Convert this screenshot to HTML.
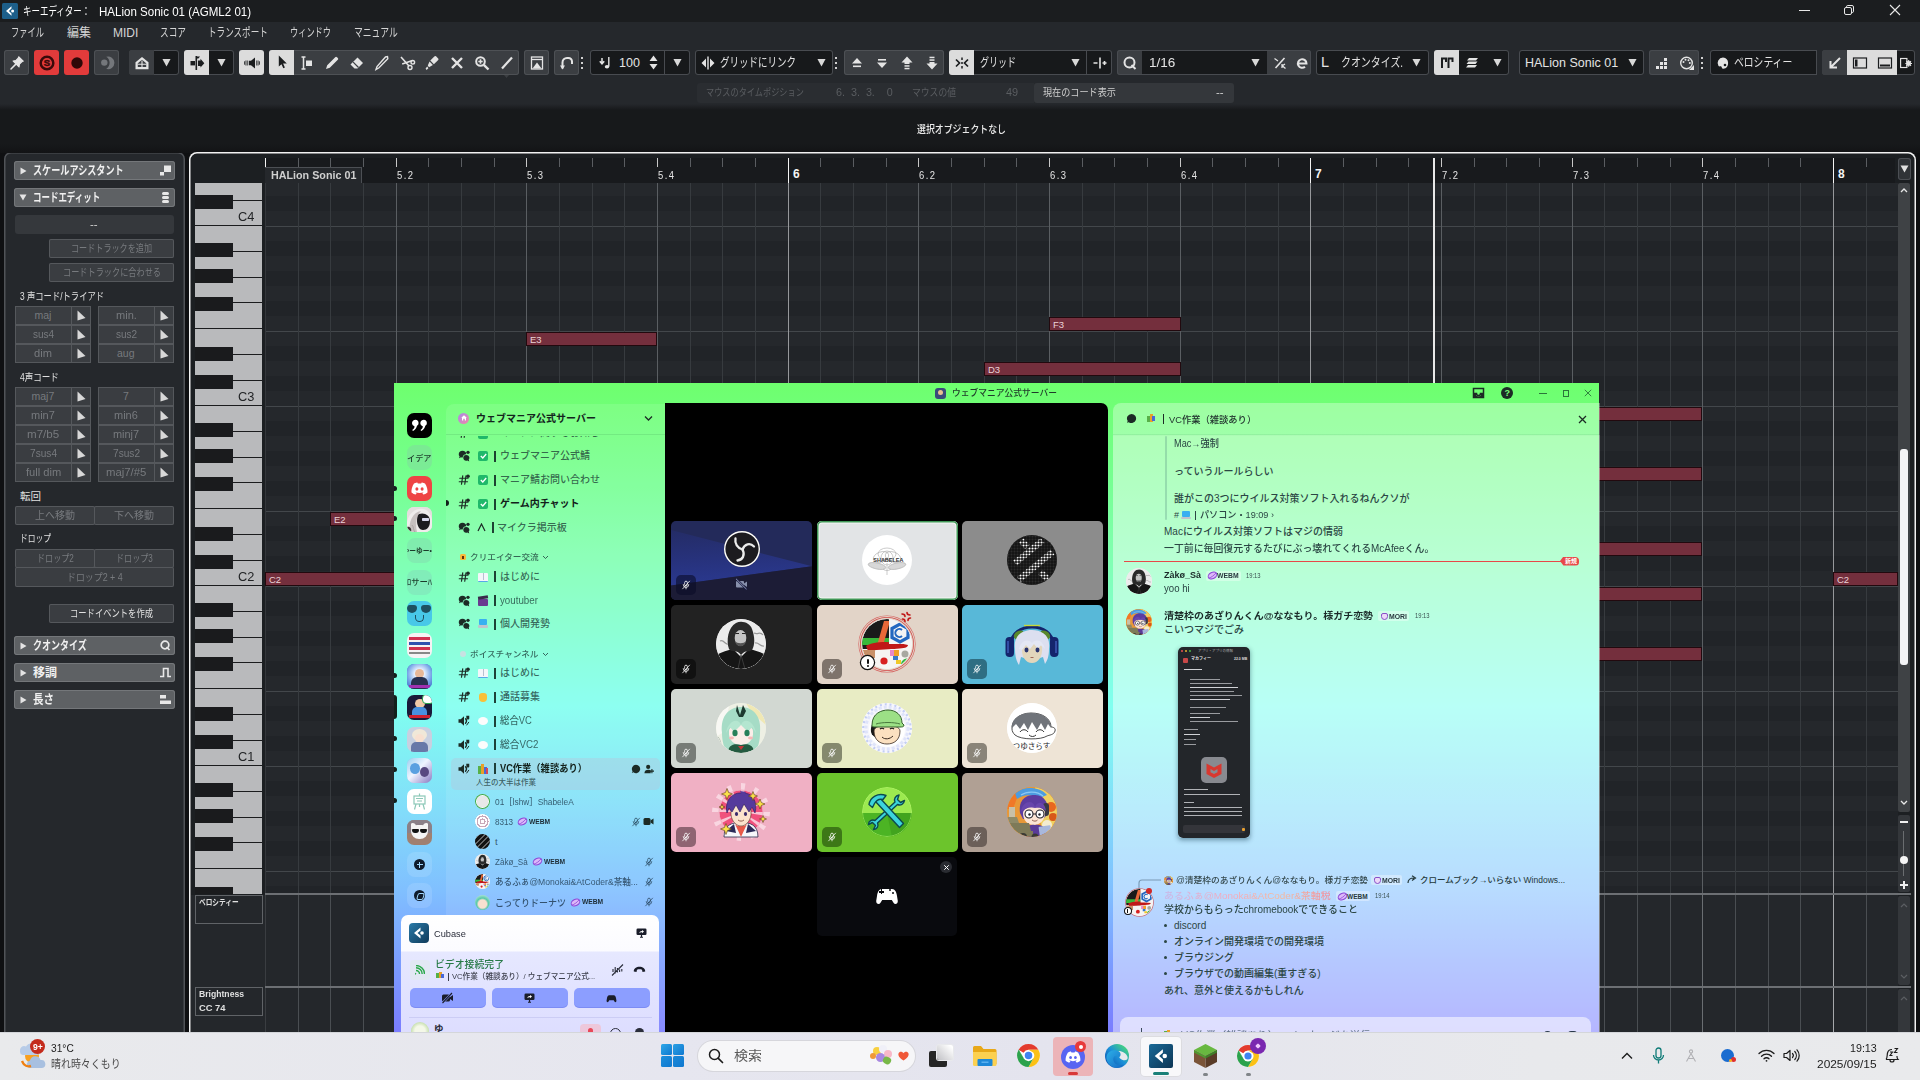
<!DOCTYPE html>
<html lang="ja"><head><meta charset="utf-8"><title>Key Editor</title><style>
html,body{margin:0;padding:0;background:#0f1012;}
body{width:1920px;height:1080px;overflow:hidden;position:relative;font-family:"Liberation Sans","Noto Sans CJK JP",sans-serif;}
#root{position:absolute;left:0;top:0;width:1920px;height:1080px;overflow:hidden;}
#root div,.a,svg.a{position:absolute;}
.t{position:absolute;white-space:nowrap;display:block;}
</style></head><body><div id="root">
<div style="left:0px;top:153px;width:1920px;height:880px;background:#0f1012;"></div>
<div style="left:4px;top:152px;width:181px;height:890px;background:#25282c;border-radius:7px;box-shadow:inset 0 0 0 1.5px #505357;"></div>
<div style="left:14px;top:161px;width:161px;height:19px;background:#5e6164;border-radius:3px;box-shadow:inset 0 0 0 1px #74777a;"></div><svg class="a" style="left:20px;top:167px" width="7" height="8" viewBox="0 0 7 8"><path d="M0.5 0.5 V7.5 L6.5 4Z" fill="#e4e4e4"/></svg><span class="t" id="t25" style="left:33px;top:162.8px;font-size:12px;line-height:17px;color:#f0f0f0;font-weight:700;transform:scaleX(0.7583);transform-origin:left center;">スケールアシスタント</span><svg class="a" style="left:159px;top:164px" width="13" height="13" viewBox="0 0 13 13"><rect x="5" y="1.5" width="7" height="6.5" fill="#e8e8e8"/><rect x="1" y="8" width="4" height="3.5" fill="#e8e8e8"/></svg>
<div style="left:14px;top:188px;width:161px;height:19px;background:#5e6164;border-radius:3px;box-shadow:inset 0 0 0 1px #74777a;"></div><svg class="a" style="left:19px;top:194px" width="8" height="7" viewBox="0 0 8 7"><path d="M0.5 0.5 H7.5 L4 6.5Z" fill="#e4e4e4"/></svg><span class="t" id="t26" style="left:33px;top:189.8px;font-size:12px;line-height:17px;color:#f0f0f0;font-weight:700;transform:scaleX(0.7053);transform-origin:left center;">コードエディット</span><svg class="a" style="left:159px;top:191px" width="13" height="13" viewBox="0 0 13 13"><rect x="3" y="1" width="7" height="3" rx="1.5" fill="#e8e8e8"/><rect x="3" y="5" width="7" height="3" rx="1.5" fill="#e8e8e8"/><rect x="3" y="9" width="7" height="3" rx="1.5" fill="#e8e8e8"/></svg>
<div style="left:15px;top:215px;width:159px;height:19px;background:#35383c;border-radius:3px;"></div>
<span class="t" id="t27" style="left:90px;top:217.5px;font-size:10px;line-height:14px;color:#d0d0d0;transform:scaleX(1.1429);transform-origin:left center;">--</span>
<div style="left:49px;top:239px;width:125px;height:19px;background:#3a3d41;box-shadow:inset 0 0 0 1px #55585c;border-radius:2px;"></div><span class="t" id="t28" style="left:71.0px;top:241px;font-size:10.5px;line-height:15px;color:#777a7e;transform:scaleX(0.7714);transform-origin:left center;">コードトラックを追加</span>
<div style="left:49px;top:263px;width:125px;height:19px;background:#3a3d41;box-shadow:inset 0 0 0 1px #55585c;border-radius:2px;"></div><span class="t" id="t29" style="left:62.5px;top:265px;font-size:10.5px;line-height:15px;color:#777a7e;transform:scaleX(0.7778);transform-origin:left center;">コードトラックに合わせる</span>
<span class="t" id="t30" style="left:20px;top:288.5px;font-size:10.5px;line-height:15px;color:#e0e0e0;transform:scaleX(0.7925);transform-origin:left center;">3 声コード/トライアド</span>
<div style="left:15px;top:306px;width:76px;height:19px;background:#3a3d41;box-shadow:inset 0 0 0 1px #55585c;"></div><div style="left:71px;top:306px;width:1px;height:19px;background:#55585c;"></div><span class="t" id="t31" style="left:34.5px;top:308px;font-size:10.5px;line-height:15px;color:#777a7e;transform:scaleX(1.0000);transform-origin:left center;">maj</span><svg class="a" style="left:77px;top:310px" width="9" height="11" viewBox="0 0 9 11"><path d="M0.5 0.5 V10.5 L8.5 8 Z" fill="#d8d8d8"/></svg>
<div style="left:98px;top:306px;width:76px;height:19px;background:#3a3d41;box-shadow:inset 0 0 0 1px #55585c;"></div><div style="left:154px;top:306px;width:1px;height:19px;background:#55585c;"></div><span class="t" id="t32" style="left:115.5px;top:308px;font-size:10.5px;line-height:15px;color:#777a7e;transform:scaleX(1.0500);transform-origin:left center;">min.</span><svg class="a" style="left:160px;top:310px" width="9" height="11" viewBox="0 0 9 11"><path d="M0.5 0.5 V10.5 L8.5 8 Z" fill="#d8d8d8"/></svg>
<div style="left:15px;top:325px;width:76px;height:19px;background:#3a3d41;box-shadow:inset 0 0 0 1px #55585c;"></div><div style="left:71px;top:325px;width:1px;height:19px;background:#55585c;"></div><span class="t" id="t33" style="left:32.5px;top:327px;font-size:10.5px;line-height:15px;color:#777a7e;transform:scaleX(0.9545);transform-origin:left center;">sus4</span><svg class="a" style="left:77px;top:329px" width="9" height="11" viewBox="0 0 9 11"><path d="M0.5 0.5 V10.5 L8.5 8 Z" fill="#d8d8d8"/></svg>
<div style="left:98px;top:325px;width:76px;height:19px;background:#3a3d41;box-shadow:inset 0 0 0 1px #55585c;"></div><div style="left:154px;top:325px;width:1px;height:19px;background:#55585c;"></div><span class="t" id="t34" style="left:115.5px;top:327px;font-size:10.5px;line-height:15px;color:#777a7e;transform:scaleX(0.9545);transform-origin:left center;">sus2</span><svg class="a" style="left:160px;top:329px" width="9" height="11" viewBox="0 0 9 11"><path d="M0.5 0.5 V10.5 L8.5 8 Z" fill="#d8d8d8"/></svg>
<div style="left:15px;top:344px;width:76px;height:19px;background:#3a3d41;box-shadow:inset 0 0 0 1px #55585c;"></div><div style="left:71px;top:344px;width:1px;height:19px;background:#55585c;"></div><span class="t" id="t35" style="left:34.0px;top:346px;font-size:10.5px;line-height:15px;color:#777a7e;transform:scaleX(1.0588);transform-origin:left center;">dim</span><svg class="a" style="left:77px;top:348px" width="9" height="11" viewBox="0 0 9 11"><path d="M0.5 0.5 V10.5 L8.5 8 Z" fill="#d8d8d8"/></svg>
<div style="left:98px;top:344px;width:76px;height:19px;background:#3a3d41;box-shadow:inset 0 0 0 1px #55585c;"></div><div style="left:154px;top:344px;width:1px;height:19px;background:#55585c;"></div><span class="t" id="t36" style="left:117.0px;top:346px;font-size:10.5px;line-height:15px;color:#777a7e;transform:scaleX(1.0000);transform-origin:left center;">aug</span><svg class="a" style="left:160px;top:348px" width="9" height="11" viewBox="0 0 9 11"><path d="M0.5 0.5 V10.5 L8.5 8 Z" fill="#d8d8d8"/></svg>
<span class="t" id="t37" style="left:20px;top:369.5px;font-size:10.5px;line-height:15px;color:#e0e0e0;transform:scaleX(0.8125);transform-origin:left center;">4声コード</span>
<div style="left:15px;top:387px;width:76px;height:19px;background:#3a3d41;box-shadow:inset 0 0 0 1px #55585c;"></div><div style="left:71px;top:387px;width:1px;height:19px;background:#55585c;"></div><span class="t" id="t38" style="left:31.5px;top:389px;font-size:10.5px;line-height:15px;color:#777a7e;transform:scaleX(1.0000);transform-origin:left center;">maj7</span><svg class="a" style="left:77px;top:391px" width="9" height="11" viewBox="0 0 9 11"><path d="M0.5 0.5 V10.5 L8.5 8 Z" fill="#d8d8d8"/></svg>
<div style="left:98px;top:387px;width:76px;height:19px;background:#3a3d41;box-shadow:inset 0 0 0 1px #55585c;"></div><div style="left:154px;top:387px;width:1px;height:19px;background:#55585c;"></div><span class="t" id="t39" style="left:123.0px;top:389px;font-size:10.5px;line-height:15px;color:#777a7e;transform:scaleX(1.0000);transform-origin:left center;">7</span><svg class="a" style="left:160px;top:391px" width="9" height="11" viewBox="0 0 9 11"><path d="M0.5 0.5 V10.5 L8.5 8 Z" fill="#d8d8d8"/></svg>
<div style="left:15px;top:406px;width:76px;height:19px;background:#3a3d41;box-shadow:inset 0 0 0 1px #55585c;"></div><div style="left:71px;top:406px;width:1px;height:19px;background:#55585c;"></div><span class="t" id="t40" style="left:31.0px;top:408px;font-size:10.5px;line-height:15px;color:#777a7e;transform:scaleX(1.0435);transform-origin:left center;">min7</span><svg class="a" style="left:77px;top:410px" width="9" height="11" viewBox="0 0 9 11"><path d="M0.5 0.5 V10.5 L8.5 8 Z" fill="#d8d8d8"/></svg>
<div style="left:98px;top:406px;width:76px;height:19px;background:#3a3d41;box-shadow:inset 0 0 0 1px #55585c;"></div><div style="left:154px;top:406px;width:1px;height:19px;background:#55585c;"></div><span class="t" id="t41" style="left:114.0px;top:408px;font-size:10.5px;line-height:15px;color:#777a7e;transform:scaleX(1.0435);transform-origin:left center;">min6</span><svg class="a" style="left:160px;top:410px" width="9" height="11" viewBox="0 0 9 11"><path d="M0.5 0.5 V10.5 L8.5 8 Z" fill="#d8d8d8"/></svg>
<div style="left:15px;top:425px;width:76px;height:19px;background:#3a3d41;box-shadow:inset 0 0 0 1px #55585c;"></div><div style="left:71px;top:425px;width:1px;height:19px;background:#55585c;"></div><span class="t" id="t42" style="left:27.0px;top:427px;font-size:10.5px;line-height:15px;color:#777a7e;transform:scaleX(1.1034);transform-origin:left center;">m7/b5</span><svg class="a" style="left:77px;top:429px" width="9" height="11" viewBox="0 0 9 11"><path d="M0.5 0.5 V10.5 L8.5 8 Z" fill="#d8d8d8"/></svg>
<div style="left:98px;top:425px;width:76px;height:19px;background:#3a3d41;box-shadow:inset 0 0 0 1px #55585c;"></div><div style="left:154px;top:425px;width:1px;height:19px;background:#55585c;"></div><span class="t" id="t43" style="left:113.0px;top:427px;font-size:10.5px;line-height:15px;color:#777a7e;transform:scaleX(1.0400);transform-origin:left center;">minj7</span><svg class="a" style="left:160px;top:429px" width="9" height="11" viewBox="0 0 9 11"><path d="M0.5 0.5 V10.5 L8.5 8 Z" fill="#d8d8d8"/></svg>
<div style="left:15px;top:444px;width:76px;height:19px;background:#3a3d41;box-shadow:inset 0 0 0 1px #55585c;"></div><div style="left:71px;top:444px;width:1px;height:19px;background:#55585c;"></div><span class="t" id="t44" style="left:29.5px;top:446px;font-size:10.5px;line-height:15px;color:#777a7e;transform:scaleX(0.9643);transform-origin:left center;">7sus4</span><svg class="a" style="left:77px;top:448px" width="9" height="11" viewBox="0 0 9 11"><path d="M0.5 0.5 V10.5 L8.5 8 Z" fill="#d8d8d8"/></svg>
<div style="left:98px;top:444px;width:76px;height:19px;background:#3a3d41;box-shadow:inset 0 0 0 1px #55585c;"></div><div style="left:154px;top:444px;width:1px;height:19px;background:#55585c;"></div><span class="t" id="t45" style="left:112.5px;top:446px;font-size:10.5px;line-height:15px;color:#777a7e;transform:scaleX(0.9643);transform-origin:left center;">7sus2</span><svg class="a" style="left:160px;top:448px" width="9" height="11" viewBox="0 0 9 11"><path d="M0.5 0.5 V10.5 L8.5 8 Z" fill="#d8d8d8"/></svg>
<div style="left:15px;top:463px;width:76px;height:19px;background:#3a3d41;box-shadow:inset 0 0 0 1px #55585c;"></div><div style="left:71px;top:463px;width:1px;height:19px;background:#55585c;"></div><span class="t" id="t46" style="left:25.5px;top:465px;font-size:10.5px;line-height:15px;color:#777a7e;transform:scaleX(1.0606);transform-origin:left center;">full dim</span><svg class="a" style="left:77px;top:467px" width="9" height="11" viewBox="0 0 9 11"><path d="M0.5 0.5 V10.5 L8.5 8 Z" fill="#d8d8d8"/></svg>
<div style="left:98px;top:463px;width:76px;height:19px;background:#3a3d41;box-shadow:inset 0 0 0 1px #55585c;"></div><div style="left:154px;top:463px;width:1px;height:19px;background:#55585c;"></div><span class="t" id="t47" style="left:106.0px;top:465px;font-size:10.5px;line-height:15px;color:#777a7e;transform:scaleX(1.0811);transform-origin:left center;">maj7/#5</span><svg class="a" style="left:160px;top:467px" width="9" height="11" viewBox="0 0 9 11"><path d="M0.5 0.5 V10.5 L8.5 8 Z" fill="#d8d8d8"/></svg>
<span class="t" id="t48" style="left:20px;top:488.5px;font-size:10.5px;line-height:15px;color:#e0e0e0;transform:scaleX(1.0000);transform-origin:left center;">転回</span>
<div style="left:15px;top:506px;width:80px;height:19px;background:#3a3d41;box-shadow:inset 0 0 0 1px #55585c;border-radius:2px;"></div><span class="t" id="t49" style="left:35.0px;top:508px;font-size:10.5px;line-height:15px;color:#777a7e;transform:scaleX(0.9524);transform-origin:left center;">上へ移動</span>
<div style="left:94px;top:506px;width:80px;height:19px;background:#3a3d41;box-shadow:inset 0 0 0 1px #55585c;border-radius:2px;"></div><span class="t" id="t50" style="left:114.0px;top:508px;font-size:10.5px;line-height:15px;color:#777a7e;transform:scaleX(0.9524);transform-origin:left center;">下へ移動</span>
<span class="t" id="t51" style="left:20px;top:531px;font-size:10.5px;line-height:15px;color:#e0e0e0;transform:scaleX(0.7381);transform-origin:left center;">ドロップ</span>
<div style="left:15px;top:549px;width:80px;height:19px;background:#3a3d41;box-shadow:inset 0 0 0 1px #55585c;border-radius:2px;"></div><span class="t" id="t52" style="left:36.5px;top:551px;font-size:10.5px;line-height:15px;color:#777a7e;transform:scaleX(0.7708);transform-origin:left center;">ドロップ2</span>
<div style="left:94px;top:549px;width:80px;height:19px;background:#3a3d41;box-shadow:inset 0 0 0 1px #55585c;border-radius:2px;"></div><span class="t" id="t53" style="left:115.5px;top:551px;font-size:10.5px;line-height:15px;color:#777a7e;transform:scaleX(0.7708);transform-origin:left center;">ドロップ3</span>
<div style="left:15px;top:567px;width:159px;height:20px;background:#3a3d41;box-shadow:inset 0 0 0 1px #55585c;border-radius:2px;"></div><span class="t" id="t54" style="left:66.5px;top:569.5px;font-size:10.5px;line-height:15px;color:#777a7e;transform:scaleX(0.8485);transform-origin:left center;">ドロップ2 + 4</span>
<div style="left:49px;top:604px;width:125px;height:19px;background:#3a3d41;box-shadow:inset 0 0 0 1px #55585c;border-radius:2px;"></div><span class="t" id="t55" style="left:70.0px;top:606px;font-size:10.5px;line-height:15px;color:#e0e0e0;transform:scaleX(0.7905);transform-origin:left center;">コードイベントを作成</span>
<div style="left:14px;top:636px;width:161px;height:19px;background:#5e6164;border-radius:3px;box-shadow:inset 0 0 0 1px #74777a;"></div><svg class="a" style="left:20px;top:642px" width="7" height="8" viewBox="0 0 7 8"><path d="M0.5 0.5 V7.5 L6.5 4Z" fill="#e4e4e4"/></svg><span class="t" id="t56" style="left:33px;top:637.8px;font-size:12px;line-height:17px;color:#f0f0f0;font-weight:700;transform:scaleX(0.7500);transform-origin:left center;">クオンタイズ</span><svg class="a" style="left:159px;top:639px" width="13" height="13" viewBox="0 0 13 13"><circle cx="6" cy="6" r="3.8" fill="none" stroke="#e8e8e8" stroke-width="1.7"/><path d="M7.5 8 L10.5 11" stroke="#e8e8e8" stroke-width="1.7"/></svg>
<div style="left:14px;top:663px;width:161px;height:19px;background:#5e6164;border-radius:3px;box-shadow:inset 0 0 0 1px #74777a;"></div><svg class="a" style="left:20px;top:669px" width="7" height="8" viewBox="0 0 7 8"><path d="M0.5 0.5 V7.5 L6.5 4Z" fill="#e4e4e4"/></svg><span class="t" id="t57" style="left:33px;top:664.8px;font-size:12px;line-height:17px;color:#f0f0f0;font-weight:700;transform:scaleX(1.0000);transform-origin:left center;">移調</span><svg class="a" style="left:159px;top:666px" width="13" height="13" viewBox="0 0 13 13"><path d="M1 10.5 H4.5 V2.5 H9 V10.5 H12" fill="none" stroke="#e8e8e8" stroke-width="1.6"/></svg>
<div style="left:14px;top:690px;width:161px;height:19px;background:#5e6164;border-radius:3px;box-shadow:inset 0 0 0 1px #74777a;"></div><svg class="a" style="left:20px;top:696px" width="7" height="8" viewBox="0 0 7 8"><path d="M0.5 0.5 V7.5 L6.5 4Z" fill="#e4e4e4"/></svg><span class="t" id="t58" style="left:33px;top:691.8px;font-size:12px;line-height:17px;color:#f0f0f0;font-weight:700;transform:scaleX(0.8750);transform-origin:left center;">長さ</span><svg class="a" style="left:159px;top:693px" width="13" height="13" viewBox="0 0 13 13"><rect x="1" y="2" width="6" height="3.5" fill="#e8e8e8"/><rect x="1" y="7.5" width="11" height="3.5" fill="#e8e8e8"/></svg>
<div style="left:0px;top:0px;width:1920px;height:22px;background:#1b1d1f;"></div>
<div style="left:0px;top:22px;width:1920px;height:85px;background:#25282c;"></div>
<div style="left:0px;top:104px;width:1920px;height:49px;background:linear-gradient(180deg,#25282c 0,#17191b 6px,#17191b 40px,#121315 49px);"></div>
<svg class="a" style="left:2px;top:3px" width="16" height="16" viewBox="0 0 16 16"><rect width="16" height="16" rx="1.5" fill="#1d5f8a"/><path d="M9.5 3.2 L4 8 L9.5 12.8 L9.5 10.4 L6.9 8 L9.5 5.6 Z" fill="#fff"/><circle cx="10.6" cy="8" r="1.5" fill="#fff"/></svg>
<span class="t" id="t1" style="left:23px;top:4px;font-size:12px;line-height:17px;color:#ffffff;transform:scaleX(0.7053);transform-origin:left center;">キーエディター：</span>
<span class="t" id="t2" style="left:98.5px;top:4px;font-size:12px;line-height:17px;color:#ffffff;transform:scaleX(0.9620);transform-origin:left center;">HALion Sonic 01 (AGML2 01)</span>
<div style="left:1799px;top:10px;width:11px;height:1px;background:#e8e8e8;"></div>
<svg class="a" style="left:1843px;top:4px" width="12" height="12" viewBox="0 0 12 12" fill="none" stroke="#e8e8e8" stroke-width="1"><rect x="1.5" y="3.5" width="7" height="7" rx="1.5"/><path d="M3.5 3.5 V2.8 A1.3 1.3 0 0 1 4.8 1.5 H9 A1.5 1.5 0 0 1 10.5 3 V7.2 A1.3 1.3 0 0 1 9.2 8.5 H8.5"/></svg>
<svg class="a" style="left:1889px;top:4px" width="12" height="12" viewBox="0 0 12 12" stroke="#e8e8e8" stroke-width="1.1"><path d="M1 1 L11 11 M11 1 L1 11"/></svg>
<span class="t" id="t3" style="left:11px;top:24.5px;font-size:12px;line-height:17px;color:#d4d4d4;transform:scaleX(0.6875);transform-origin:left center;">ファイル</span>
<span class="t" id="t4" style="left:67px;top:24.5px;font-size:12px;line-height:17px;color:#d4d4d4;transform:scaleX(1.0000);transform-origin:left center;">編集</span>
<span class="t" id="t5" style="left:113px;top:24.5px;font-size:12px;line-height:17px;color:#d4d4d4;transform:scaleX(1.0000);transform-origin:left center;">MIDI</span>
<span class="t" id="t6" style="left:160px;top:24.5px;font-size:12px;line-height:17px;color:#d4d4d4;transform:scaleX(0.7222);transform-origin:left center;">スコア</span>
<span class="t" id="t7" style="left:208px;top:24.5px;font-size:12px;line-height:17px;color:#d4d4d4;transform:scaleX(0.7143);transform-origin:left center;">トランスポート</span>
<span class="t" id="t8" style="left:290px;top:24.5px;font-size:12px;line-height:17px;color:#d4d4d4;transform:scaleX(0.6833);transform-origin:left center;">ウィンドウ</span>
<span class="t" id="t9" style="left:354px;top:24.5px;font-size:12px;line-height:17px;color:#d4d4d4;transform:scaleX(0.7333);transform-origin:left center;">マニュアル</span>
<div style="left:4px;top:50px;width:25px;height:25px;background:#3b3e42;border-radius:3px;box-shadow:inset 0 0 0 1px #4e5155;"></div>
<svg class="a" style="left:6.5px;top:52.5px" width="20" height="20" viewBox="0 0 20 20"><path d="M11.8 3.8 L16.2 8.2 L14.8 8.8 L12.4 11.2 L12 13.8 L6.2 8 L8.8 7.6 L11.2 5.2 Z" fill="#e4e4e4" stroke="#e4e4e4" stroke-width="1.2" stroke-linejoin="round"/><path d="M8.6 11.4 L4 16" stroke="#e4e4e4" stroke-width="1.5" stroke-linecap="round"/></svg>
<div style="left:34px;top:50px;width:25px;height:25px;background:#e23b3b;border-radius:3px;"></div>
<svg class="a" style="left:36.5px;top:52.5px" width="20" height="20" viewBox="0 0 20 20"><circle cx="10" cy="10" r="6.3" fill="none" stroke="#3a0a0a" stroke-width="2.5"/><text x="10" y="13.3" font-size="9.5" font-weight="700" text-anchor="middle" fill="#3a0a0a" stroke="#3a0a0a" stroke-width="0.5" font-family="Liberation Sans,sans-serif">S</text></svg>
<div style="left:64px;top:50px;width:25px;height:25px;background:#e23b3b;border-radius:3px;"></div>
<svg class="a" style="left:66.5px;top:52.5px" width="20" height="20" viewBox="0 0 20 20"><circle cx="10" cy="10" r="5.7" fill="#2e0808"/></svg>
<div style="left:94px;top:50px;width:25px;height:25px;background:#3b3e42;border-radius:3px;box-shadow:inset 0 0 0 1px #4e5155;"></div>
<svg class="a" style="left:96.5px;top:52.5px" width="20" height="20" viewBox="0 0 20 20"><circle cx="7.3" cy="9.6" r="3.2" fill="#74777b"/><path d="M9.2 3.8 A6.3 6.3 0 1 1 9.2 15.8 A7 7 0 0 0 9.2 3.8Z" fill="#74777b"/></svg>
<div style="left:129px;top:50px;width:50px;height:25px;background:#17191b;border-radius:3px;box-shadow:inset 0 0 0 1px #484b50;"></div>
<div style="left:129px;top:50px;width:25px;height:25px;background:#3b3e42;border-radius:3px 0 0 3px;"></div>
<svg class="a" style="left:131.5px;top:52.5px" width="20" height="20" viewBox="0 0 20 20"><path d="M3.5 9.2 L10 4 L16.5 9.2 V16.2 H3.5Z" fill="#e4e4e4"/><path d="M5.8 10.2 L10 6.8 L14.2 10.2 V14 H5.8Z" fill="#3b3e42"/><path d="M10 7.5 V14 M5.8 11.2 H14.2" stroke="#e4e4e4" stroke-width="1.1"/></svg>
<svg class="a" style="left:162.0px;top:58.45px" width="9.0" height="9.0" viewBox="0 0 10 10"><path d="M0.5 1 H9.5 L5 9.5 Z" fill="#d8d8d8"/></svg>
<div style="left:184px;top:50px;width:50px;height:25px;background:#17191b;border-radius:3px;box-shadow:inset 0 0 0 1px #484b50;"></div>
<div style="left:184px;top:50px;width:25px;height:25px;background:#dcdcdc;border-radius:3px 0 0 3px;"></div>
<svg class="a" style="left:186.5px;top:52.5px" width="20" height="20" viewBox="0 0 20 20"><path d="M9.3 3 V17" stroke="#1b1d1f" stroke-width="1.6"/><path d="M9.3 3.5 H13 L11.4 5.5 H9.3Z" fill="#1b1d1f"/><rect x="3.5" y="8" width="4.5" height="4.4" fill="#1b1d1f"/><path d="M11 7.5 H13.5 V5.8 L17.3 10.2 L13.5 14.6 V12.9 H11Z" fill="#1b1d1f"/></svg>
<svg class="a" style="left:217.0px;top:58.45px" width="9.0" height="9.0" viewBox="0 0 10 10"><path d="M0.5 1 H9.5 L5 9.5 Z" fill="#d8d8d8"/></svg>
<div style="left:239px;top:50px;width:25px;height:25px;background:#dcdcdc;border-radius:3px;"></div>
<svg class="a" style="left:241.5px;top:52.5px" width="20" height="20" viewBox="0 0 20 20"><path d="M6.8 7.8 H9 L13 4.5 V15.5 L9 12.2 H6.8Z" fill="#1b1d1f"/><path d="M5.3 7.5 V12.5 M3.9 7.5 V12.5 M2.5 8.3 V11.7 M14.7 7.5 V12.5 M16.1 7.5 V12.5 M17.5 8.3 V11.7" stroke="#1b1d1f" stroke-width="0.8"/></svg>
<div style="left:269px;top:50px;width:250px;height:25px;background:#3b3e42;border-radius:3px;box-shadow:inset 0 0 0 1px #4e5155;"></div>
<div style="left:269px;top:50px;width:25px;height:25px;background:#dcdcdc;border-radius:3px 0 0 3px;"></div>
<svg class="a" style="left:271.5px;top:52.5px" width="20" height="20" viewBox="0 0 20 20"><path d="M6.8 2.5 V13.6 L9.5 11.2 L11.3 15.3 L12.9 14.6 L11.1 10.6 H14.8 Z" fill="#1b1d1f"/></svg>
<svg class="a" style="left:296.5px;top:52.5px" width="20" height="20" viewBox="0 0 20 20"><path d="M6.5 4 V16 M4.5 4 H8.5 M4.5 16 H8.5" stroke="#e4e4e4" stroke-width="1.5" fill="none"/><rect x="9" y="7.5" width="6" height="5.5" fill="#e4e4e4"/></svg>
<svg class="a" style="left:321.5px;top:52.5px" width="20" height="20" viewBox="0 0 20 20"><path d="M4 16 L5.2 12.2 L13.2 4.2 A1.2 1.2 0 0 1 15 4.2 L15.8 5 A1.2 1.2 0 0 1 15.8 6.8 L7.8 14.8 Z" fill="#e4e4e4"/></svg>
<svg class="a" style="left:346.5px;top:52.5px" width="20" height="20" viewBox="0 0 20 20"><path d="M3.5 11.5 L10.5 4.5 L16 10 L10.5 15.5 H7.5 Z" fill="#e4e4e4"/><path d="M6.2 9.2 L11.5 14.5" stroke="#3b3e42" stroke-width="1.2"/></svg>
<svg class="a" style="left:371.5px;top:52.5px" width="20" height="20" viewBox="0 0 20 20"><path d="M4 16.5 L5 13.5 L13.5 4 L15.5 3.5 L15.8 5.8 L7 14.8 Z" fill="none" stroke="#e4e4e4" stroke-width="1.4"/></svg>
<svg class="a" style="left:396.5px;top:52.5px" width="20" height="20" viewBox="0 0 20 20"><path d="M4 4 L12 13 M5.2 11 L15.5 7.5" stroke="#e4e4e4" stroke-width="1.6" fill="none"/><circle cx="13" cy="14.5" r="2" fill="none" stroke="#e4e4e4" stroke-width="1.4"/><circle cx="15.8" cy="9.3" r="1.8" fill="none" stroke="#e4e4e4" stroke-width="1.4"/></svg>
<svg class="a" style="left:421.5px;top:52.5px" width="20" height="20" viewBox="0 0 20 20"><path d="M8.3 7.6 L12.6 3.3 A1 1 0 0 1 14 3.3 L16.2 5.5 A1 1 0 0 1 16.2 6.9 L11.9 11.2Z" fill="#e4e4e4"/><path d="M7.5 8.6 L10.9 12 L7 14.2 L5.8 12.4Z" fill="#e4e4e4"/><path d="M5.2 13.6 L6.4 15.2 L4.6 17 L3.6 15.6Z" fill="#e4e4e4"/></svg>
<svg class="a" style="left:446.5px;top:52.5px" width="20" height="20" viewBox="0 0 20 20"><path d="M5 5 L15 15 M15 5 L5 15" stroke="#e4e4e4" stroke-width="2.4"/></svg>
<svg class="a" style="left:471.5px;top:52.5px" width="20" height="20" viewBox="0 0 20 20"><circle cx="8.5" cy="8.5" r="4.3" fill="none" stroke="#e4e4e4" stroke-width="2"/><path d="M11.8 11.8 L16.5 16.5" stroke="#e4e4e4" stroke-width="2.4"/><path d="M6.3 8.5 H10.7 M8.5 6.3 V10.7" stroke="#e4e4e4" stroke-width="1.6"/></svg>
<svg class="a" style="left:496.5px;top:52.5px" width="20" height="20" viewBox="0 0 20 20"><path d="M5 15.5 L15 4.5" stroke="#e4e4e4" stroke-width="2.2"/></svg>
<svg class="a" style="left:504px;top:74.5px" width="5" height="3" viewBox="0 0 5 3"><path d="M0 0 H5 L2.5 3Z" fill="#3b3e42"/></svg>
<div style="left:524px;top:50px;width:25px;height:25px;background:#3b3e42;border-radius:3px;box-shadow:inset 0 0 0 1px #4e5155;"></div>
<svg class="a" style="left:526.5px;top:52.5px" width="20" height="20" viewBox="0 0 20 20"><rect x="4.5" y="4" width="11" height="12" fill="none" stroke="#e4e4e4" stroke-width="1.3"/><path d="M4.5 6.5 H15.5" stroke="#e4e4e4" stroke-width="1.3"/><path d="M5.5 15.5 L10 9.5 L14.5 15.5Z" fill="#e4e4e4"/></svg>
<div style="left:554px;top:50px;width:25px;height:25px;background:#3b3e42;border-radius:3px;box-shadow:inset 0 0 0 1px #4e5155;"></div>
<svg class="a" style="left:556.5px;top:52.5px" width="20" height="20" viewBox="0 0 20 20"><path d="M5.5 15.5 V9.5 A4.5 4.5 0 0 1 10 5 H11.5 A3.5 3.5 0 0 1 15 8.5 V11" fill="none" stroke="#e4e4e4" stroke-width="2"/><path d="M3 12.5 L5.5 16.5 L8 12.5Z" fill="#e4e4e4"/></svg>
<div style="left:581px;top:57px;width:2px;height:2px;background:#d0d0d0;"></div><div style="left:581px;top:62px;width:2px;height:2px;background:#d0d0d0;"></div><div style="left:581px;top:67px;width:2px;height:2px;background:#d0d0d0;"></div>
<div style="left:590px;top:50px;width:100px;height:25px;background:#17191b;border-radius:3px;box-shadow:inset 0 0 0 1px #484b50;"></div>
<div style="left:664px;top:50px;width:1px;height:25px;background:#484b50;"></div>
<svg class="a" style="left:595.5px;top:52.5px" width="20" height="20" viewBox="0 0 20 20"><path d="M6 5 V10 M3.8 8.2 L6 10.8 L8.2 8.2" stroke="#e4e4e4" stroke-width="1.5" fill="none"/><path d="M12.8 4 V13.5" stroke="#e4e4e4" stroke-width="1.4"/><ellipse cx="11" cy="13.8" rx="2.2" ry="1.7" fill="#e4e4e4"/></svg>
<span class="t" id="t10" style="left:619px;top:53.5px;font-size:12.5px;line-height:18px;color:#e4e4e4;transform:scaleX(1.0000);transform-origin:left center;">100</span>
<svg class="a" style="left:649px;top:55px" width="9" height="15" viewBox="0 0 9 15"><path d="M0.5 6 L4.5 0.5 L8.5 6Z M0.5 9 L4.5 14.5 L8.5 9Z" fill="#e4e4e4"/></svg>
<svg class="a" style="left:673.0px;top:58.45px" width="9.0" height="9.0" viewBox="0 0 10 10"><path d="M0.5 1 H9.5 L5 9.5 Z" fill="#d8d8d8"/></svg>
<div style="left:695px;top:50px;width:138px;height:25px;background:#17191b;border-radius:3px;box-shadow:inset 0 0 0 1px #484b50;"></div>
<svg class="a" style="left:697.5px;top:52.5px" width="20" height="20" viewBox="0 0 20 20"><path d="M10 3.5 V16.5" stroke="#e4e4e4" stroke-width="1.4"/><path d="M8 5.5 V14.5 L3.5 10Z M12 5.5 V14.5 L16.5 10Z" fill="#e4e4e4"/></svg>
<span class="t" id="t11" style="left:720px;top:53.5px;font-size:12.5px;line-height:18px;color:#e4e4e4;transform:scaleX(0.7600);transform-origin:left center;">グリッドにリンク</span>
<svg class="a" style="left:816.5px;top:58.45px" width="9.0" height="9.0" viewBox="0 0 10 10"><path d="M0.5 1 H9.5 L5 9.5 Z" fill="#d8d8d8"/></svg>
<div style="left:835px;top:57px;width:2px;height:2px;background:#d0d0d0;"></div><div style="left:835px;top:62px;width:2px;height:2px;background:#d0d0d0;"></div><div style="left:835px;top:67px;width:2px;height:2px;background:#d0d0d0;"></div>
<div style="left:844px;top:50px;width:100px;height:25px;background:#3b3e42;border-radius:3px;box-shadow:inset 0 0 0 1px #4e5155;"></div>
<svg class="a" style="left:847.0px;top:52.5px" width="20" height="20" viewBox="0 0 20 20"><path d="M5 10.5 L10 5 L15 10.5Z" fill="#e4e4e4"/><rect x="6" y="12.5" width="8" height="1.6" fill="#e4e4e4"/></svg>
<svg class="a" style="left:871.5px;top:52.5px" width="20" height="20" viewBox="0 0 20 20"><path d="M5 9.5 L10 15 L15 9.5Z" fill="#e4e4e4"/><rect x="6" y="6" width="8" height="1.6" fill="#e4e4e4"/></svg>
<svg class="a" style="left:897.0px;top:52.5px" width="20" height="20" viewBox="0 0 20 20"><path d="M4.5 9.5 L10 3.5 L15.5 9.5 H12.5 V11 H7.5 V9.5Z" fill="#e4e4e4"/><rect x="7.5" y="12.2" width="5" height="1.5" fill="#e4e4e4"/><rect x="7.5" y="14.8" width="5" height="1.5" fill="#e4e4e4"/></svg>
<svg class="a" style="left:922.0px;top:52.5px" width="20" height="20" viewBox="0 0 20 20"><path d="M4.5 10.5 L10 16.5 L15.5 10.5 H12.5 V9 H7.5 V10.5Z" fill="#e4e4e4"/><rect x="7.5" y="6.3" width="5" height="1.5" fill="#e4e4e4"/><rect x="7.5" y="3.7" width="5" height="1.5" fill="#e4e4e4"/></svg>
<div style="left:949px;top:50px;width:163px;height:25px;background:#17191b;border-radius:3px;box-shadow:inset 0 0 0 1px #484b50;"></div>
<div style="left:949px;top:50px;width:25px;height:25px;background:#dcdcdc;border-radius:3px 0 0 3px;"></div>
<div style="left:1086px;top:50px;width:1px;height:25px;background:#484b50;"></div>
<svg class="a" style="left:951.5px;top:52.5px" width="20" height="20" viewBox="0 0 20 20"><path d="M10 4.5 V7 M10 13 V15.5" stroke="#1b1d1f" stroke-width="1.5"/><circle cx="10" cy="10" r="1" fill="#1b1d1f"/><path d="M4 6.5 L7.5 10 L4 13.5 M16 6.5 L12.5 10 L16 13.5" stroke="#1b1d1f" stroke-width="1.7" fill="none"/></svg>
<span class="t" id="t12" style="left:980px;top:53.5px;font-size:12.5px;line-height:18px;color:#e4e4e4;transform:scaleX(0.7200);transform-origin:left center;">グリッド</span>
<svg class="a" style="left:1070.5px;top:58.45px" width="9.0" height="9.0" viewBox="0 0 10 10"><path d="M0.5 1 H9.5 L5 9.5 Z" fill="#d8d8d8"/></svg>
<svg class="a" style="left:1089.5px;top:52.5px" width="20" height="20" viewBox="0 0 20 20"><path d="M10 4.5 V15.5" stroke="#e4e4e4" stroke-width="1.6"/><path d="M3.5 10 H7.5 M12.5 10 H16.5 M14.5 8 V12" stroke="#e4e4e4" stroke-width="1.6"/></svg>
<div style="left:1117px;top:50px;width:194px;height:25px;background:#3b3e42;border-radius:3px;box-shadow:inset 0 0 0 1px #484b50;"></div>
<div style="left:1142px;top:51px;width:125px;height:23px;background:#17191b;"></div>
<svg class="a" style="left:1119.5px;top:52.5px" width="20" height="20" viewBox="0 0 20 20"><circle cx="9.5" cy="9.5" r="5" fill="none" stroke="#e4e4e4" stroke-width="2"/><path d="M11.5 12 L15.5 16" stroke="#e4e4e4" stroke-width="2"/></svg>
<span class="t" id="t13" style="left:1149px;top:53.5px;font-size:12.5px;line-height:18px;color:#e4e4e4;transform:scaleX(1.0833);transform-origin:left center;">1/16</span>
<svg class="a" style="left:1250.5px;top:58.45px" width="9.0" height="9.0" viewBox="0 0 10 10"><path d="M0.5 1 H9.5 L5 9.5 Z" fill="#d8d8d8"/></svg>
<svg class="a" style="left:1269.5px;top:52.5px" width="20" height="20" viewBox="0 0 20 20"><path d="M14.5 5 L5.5 15" stroke="#e4e4e4" stroke-width="1.6"/><path d="M4.5 5.5 L8 8 M12 11 L12 15 M12 13 L15 11 M12.5 13 L15.5 15.5" stroke="#e4e4e4" stroke-width="1.3" fill="none"/></svg>
<svg class="a" style="left:1291.5px;top:52.5px" width="20" height="20" viewBox="0 0 20 20"><path d="M5.5 10.5 H14.5 A4.3 4.3 0 1 0 13 13.8" fill="none" stroke="#e4e4e4" stroke-width="2"/></svg>
<div style="left:1316px;top:50px;width:113px;height:25px;background:#17191b;border-radius:3px;box-shadow:inset 0 0 0 1px #484b50;"></div>
<span class="t" id="t14" style="left:1321px;top:52px;font-size:14.5px;line-height:20px;color:#e4e4e4;">L</span>
<span class="t" id="t15" style="left:1341px;top:53.5px;font-size:12.5px;line-height:18px;color:#e4e4e4;transform:scaleX(0.7949);transform-origin:left center;">クオンタイズ.</span>
<svg class="a" style="left:1412.0px;top:58.45px" width="9.0" height="9.0" viewBox="0 0 10 10"><path d="M0.5 1 H9.5 L5 9.5 Z" fill="#d8d8d8"/></svg>
<div style="left:1434px;top:50px;width:75px;height:25px;background:#17191b;border-radius:3px;box-shadow:inset 0 0 0 1px #484b50;"></div>
<div style="left:1434px;top:50px;width:25px;height:25px;background:#dcdcdc;border-radius:3px 0 0 3px;"></div>
<svg class="a" style="left:1436.5px;top:52.5px" width="20" height="20" viewBox="0 0 20 20"><path d="M5 15 V5.5 H9 V9 M11.5 15 V5.5 H15.5 V9" fill="none" stroke="#1b1d1f" stroke-width="2"/></svg>
<svg class="a" style="left:1461.5px;top:52.5px" width="20" height="20" viewBox="0 0 20 20"><path d="M5 7.5 L7 5 H16 L14 7.5Z M4.5 11 L6.5 8.5 H15.5 L13.5 11Z M4 14.5 L6 12 H15 L13 14.5Z" fill="#e4e4e4"/></svg>
<svg class="a" style="left:1492.5px;top:58.45px" width="9.0" height="9.0" viewBox="0 0 10 10"><path d="M0.5 1 H9.5 L5 9.5 Z" fill="#d8d8d8"/></svg>
<div style="left:1519px;top:50px;width:125px;height:25px;background:#17191b;border-radius:3px;box-shadow:inset 0 0 0 1px #484b50;"></div>
<span class="t" id="t16" style="left:1525px;top:53.5px;font-size:12.5px;line-height:18px;color:#e4e4e4;transform:scaleX(1.0000);transform-origin:left center;">HALion Sonic 01</span>
<svg class="a" style="left:1627.5px;top:58.45px" width="9.0" height="9.0" viewBox="0 0 10 10"><path d="M0.5 1 H9.5 L5 9.5 Z" fill="#d8d8d8"/></svg>
<div style="left:1649px;top:50px;width:50px;height:25px;background:#3b3e42;border-radius:3px;box-shadow:inset 0 0 0 1px #484b50;"></div>
<svg class="a" style="left:1651.5px;top:52.5px" width="20" height="20" viewBox="0 0 20 20"><rect x="4" y="13" width="3" height="3" fill="#e4e4e4"/><rect x="8" y="13" width="3" height="3" fill="#e4e4e4"/><rect x="12" y="13" width="3" height="3" fill="#e4e4e4"/><rect x="8" y="9" width="3" height="3" fill="#e4e4e4"/><rect x="12" y="9" width="3" height="3" fill="#e4e4e4"/><rect x="12" y="5" width="3" height="3" fill="#e4e4e4"/></svg>
<svg class="a" style="left:1676.5px;top:52.5px" width="20" height="20" viewBox="0 0 20 20"><circle cx="9.5" cy="10" r="5.8" fill="none" stroke="#e4e4e4" stroke-width="1.4"/><circle cx="6.5" cy="9" r="1" fill="#e4e4e4"/><circle cx="8.5" cy="6.8" r="1" fill="#e4e4e4"/><circle cx="11.5" cy="7.2" r="1" fill="#e4e4e4"/><circle cx="12.8" cy="10" r="1" fill="#e4e4e4"/><path d="M12 17 L17 17 L17 12Z" fill="#e4e4e4"/></svg>
<div style="left:1701px;top:57px;width:2px;height:2px;background:#d0d0d0;"></div><div style="left:1701px;top:62px;width:2px;height:2px;background:#d0d0d0;"></div><div style="left:1701px;top:67px;width:2px;height:2px;background:#d0d0d0;"></div>
<div style="left:1710px;top:50px;width:107px;height:25px;background:#17191b;border-radius:3px 0 0 3px;box-shadow:inset 0 0 0 1px #484b50;"></div>
<svg class="a" style="left:1712.5px;top:52.5px" width="20" height="20" viewBox="0 0 20 20"><path d="M10 4.5 A5.5 5.5 0 0 0 5.5 13 C6.5 13.8 7.5 13 8.3 13.5 C9.2 14.2 8.5 15.8 10.3 15.8 A5.7 5.7 0 0 0 10 4.5Z" fill="#e4e4e4"/><circle cx="12" cy="12" r="1.3" fill="#17191b"/></svg>
<span class="t" id="t17" style="left:1734px;top:53.5px;font-size:12.5px;line-height:18px;color:#e4e4e4;transform:scaleX(0.7838);transform-origin:left center;">ベロシティー</span>
<div style="left:1822px;top:50px;width:93px;height:25px;background:#17191b;border-radius:3px;box-shadow:inset 0 0 0 1px #484b50;"></div>
<div style="left:1822px;top:50px;width:25px;height:25px;background:#3b3e42;border-radius:3px 0 0 3px;"></div>
<div style="left:1847px;top:50px;width:50px;height:25px;background:#dcdcdc;"></div>
<svg class="a" style="left:1824.5px;top:52.5px" width="20" height="20" viewBox="0 0 20 20"><path d="M15 5 L6.5 13.5 M5.5 8 V14.5 H12" stroke="#e4e4e4" stroke-width="2" fill="none"/></svg>
<svg class="a" style="left:1849.5px;top:52.5px" width="20" height="20" viewBox="0 0 20 20"><rect x="3.5" y="5" width="13" height="10" fill="none" stroke="#1b1d1f" stroke-width="1.2"/><rect x="5" y="6.5" width="2.5" height="7" fill="#1b1d1f"/></svg>
<svg class="a" style="left:1874.5px;top:52.5px" width="20" height="20" viewBox="0 0 20 20"><rect x="3.5" y="5" width="13" height="10" fill="none" stroke="#1b1d1f" stroke-width="1.2"/><rect x="5" y="11.5" width="10" height="2" fill="#1b1d1f"/></svg>
<svg class="a" style="left:1897.0px;top:53.5px" width="18" height="18" viewBox="0 0 20 20"><rect x="4" y="5" width="7" height="10" fill="none" stroke="#e4e4e4" stroke-width="1.3"/><circle cx="13" cy="10.5" r="2.6" fill="#e4e4e4"/><circle cx="13" cy="10.5" r="1" fill="#17191b"/><path d="M13 6.8 V14.2 M9.3 10.5 H16.7 M10.4 7.9 L15.6 13.1 M15.6 7.9 L10.4 13.1" stroke="#e4e4e4" stroke-width="1.2"/></svg>
<div style="left:697px;top:83px;width:337px;height:20px;background:#2a2d31;border-radius:3px 0 0 3px;"></div>
<div style="left:1034px;top:83px;width:200px;height:20px;background:#34373b;border-radius:3px;"></div>
<span class="t" id="t18" style="left:706px;top:85.5px;font-size:10px;line-height:14px;color:#5a5d61;transform:scaleX(0.8167);transform-origin:left center;">マウスのタイムポジション</span>
<span class="t" id="t19" style="left:836px;top:85.5px;font-size:10px;line-height:14px;color:#5a5d61;transform:scaleX(1.0755);transform-origin:left center;white-space:pre;">6.  3.  3.    0</span>
<span class="t" id="t20" style="left:912px;top:85.5px;font-size:10px;line-height:14px;color:#5a5d61;transform:scaleX(0.8800);transform-origin:left center;">マウスの値</span>
<span class="t" id="t21" style="left:1006px;top:85.5px;font-size:10px;line-height:14px;color:#5a5d61;transform:scaleX(1.0909);transform-origin:left center;">49</span>
<span class="t" id="t22" style="left:1043px;top:85.5px;font-size:10px;line-height:14px;color:#d0d0d0;transform:scaleX(0.9125);transform-origin:left center;">現在のコード表示</span>
<span class="t" id="t23" style="left:1216px;top:85.5px;font-size:10px;line-height:14px;color:#d0d0d0;transform:scaleX(1.1429);transform-origin:left center;">--</span>
<span class="t" id="t24" style="left:917px;top:122.3px;font-size:10.5px;line-height:15px;color:#e8e8e8;font-weight:500;transform:scaleX(0.8476);transform-origin:left center;">選択オブジェクトなし</span>
<div style="left:189px;top:152px;width:1727px;height:900px;background:#1c1f22;border-radius:8px;box-shadow:inset 0 0 0 1.5px #f2f2f2;"></div>
<div style="left:265px;top:158px;width:1630px;height:25px;background:#181a1d;"></div>
<svg class="a" style="left:0;top:0" width="1920" height="1040" viewBox="0 0 1920 1040" shape-rendering="crispEdges"><rect x="265" y="183" width="1633" height="711" fill="#25282c"/><rect x="265" y="196" width="1633" height="15" fill="#212428"/><rect x="265" y="241" width="1633" height="15" fill="#212428"/><rect x="265" y="271" width="1633" height="15" fill="#212428"/><rect x="265" y="301" width="1633" height="15" fill="#212428"/><rect x="265" y="346" width="1633" height="15" fill="#212428"/><rect x="265" y="376" width="1633" height="15" fill="#212428"/><rect x="265" y="421" width="1633" height="15" fill="#212428"/><rect x="265" y="451" width="1633" height="15" fill="#212428"/><rect x="265" y="481" width="1633" height="15" fill="#212428"/><rect x="265" y="526" width="1633" height="15" fill="#212428"/><rect x="265" y="556" width="1633" height="15" fill="#212428"/><rect x="265" y="601" width="1633" height="15" fill="#212428"/><rect x="265" y="631" width="1633" height="15" fill="#212428"/><rect x="265" y="661" width="1633" height="15" fill="#212428"/><rect x="265" y="706" width="1633" height="15" fill="#212428"/><rect x="265" y="736" width="1633" height="15" fill="#212428"/><rect x="265" y="781" width="1633" height="15" fill="#212428"/><rect x="265" y="811" width="1633" height="15" fill="#212428"/><rect x="265" y="841" width="1633" height="15" fill="#212428"/><rect x="265" y="886" width="1633" height="15" fill="#212428"/><rect x="191" y="895" width="1707" height="145" fill="#24272b"/><rect x="265" y="226" width="1633" height="1" fill="#43474b"/><rect x="265" y="331" width="1633" height="1" fill="#43474b"/><rect x="265" y="406" width="1633" height="1" fill="#43474b"/><rect x="265" y="511" width="1633" height="1" fill="#43474b"/><rect x="265" y="586" width="1633" height="1" fill="#43474b"/><rect x="265" y="691" width="1633" height="1" fill="#43474b"/><rect x="265" y="766" width="1633" height="1" fill="#43474b"/><rect x="265" y="871" width="1633" height="1" fill="#43474b"/><rect x="265" y="183" width="1" height="711" fill="#34373b"/><rect x="265" y="895" width="1" height="150" fill="#3a3d41"/><rect x="265" y="158" width="1" height="25" fill="#f4f4f4"/><rect x="298" y="183" width="1" height="711" fill="#373b3f"/><rect x="298" y="895" width="1" height="150" fill="#4a4e52"/><rect x="298" y="158" width="1" height="9" fill="#5a5d61"/><rect x="330" y="183" width="1" height="711" fill="#373b3f"/><rect x="330" y="895" width="1" height="150" fill="#4a4e52"/><rect x="330" y="158" width="1" height="9" fill="#5a5d61"/><rect x="363" y="183" width="1" height="711" fill="#373b3f"/><rect x="363" y="895" width="1" height="150" fill="#4a4e52"/><rect x="363" y="158" width="1" height="9" fill="#5a5d61"/><rect x="396" y="183" width="1" height="711" fill="#5a5e62"/><rect x="396" y="895" width="1" height="150" fill="#6a6e72"/><rect x="396" y="158" width="1" height="9" fill="#c8c8c8"/><rect x="428" y="183" width="1" height="711" fill="#373b3f"/><rect x="428" y="895" width="1" height="150" fill="#4a4e52"/><rect x="428" y="158" width="1" height="9" fill="#5a5d61"/><rect x="461" y="183" width="1" height="711" fill="#373b3f"/><rect x="461" y="895" width="1" height="150" fill="#4a4e52"/><rect x="461" y="158" width="1" height="9" fill="#5a5d61"/><rect x="494" y="183" width="1" height="711" fill="#373b3f"/><rect x="494" y="895" width="1" height="150" fill="#4a4e52"/><rect x="494" y="158" width="1" height="9" fill="#5a5d61"/><rect x="526" y="183" width="1" height="711" fill="#5a5e62"/><rect x="526" y="895" width="1" height="150" fill="#6a6e72"/><rect x="526" y="158" width="1" height="9" fill="#c8c8c8"/><rect x="559" y="183" width="1" height="711" fill="#373b3f"/><rect x="559" y="895" width="1" height="150" fill="#4a4e52"/><rect x="559" y="158" width="1" height="9" fill="#5a5d61"/><rect x="592" y="183" width="1" height="711" fill="#373b3f"/><rect x="592" y="895" width="1" height="150" fill="#4a4e52"/><rect x="592" y="158" width="1" height="9" fill="#5a5d61"/><rect x="624" y="183" width="1" height="711" fill="#373b3f"/><rect x="624" y="895" width="1" height="150" fill="#4a4e52"/><rect x="624" y="158" width="1" height="9" fill="#5a5d61"/><rect x="657" y="183" width="1" height="711" fill="#5a5e62"/><rect x="657" y="895" width="1" height="150" fill="#6a6e72"/><rect x="657" y="158" width="1" height="9" fill="#c8c8c8"/><rect x="690" y="183" width="1" height="711" fill="#373b3f"/><rect x="690" y="895" width="1" height="150" fill="#4a4e52"/><rect x="690" y="158" width="1" height="9" fill="#5a5d61"/><rect x="722" y="183" width="1" height="711" fill="#373b3f"/><rect x="722" y="895" width="1" height="150" fill="#4a4e52"/><rect x="722" y="158" width="1" height="9" fill="#5a5d61"/><rect x="755" y="183" width="1" height="711" fill="#373b3f"/><rect x="755" y="895" width="1" height="150" fill="#4a4e52"/><rect x="755" y="158" width="1" height="9" fill="#5a5d61"/><rect x="788" y="183" width="1" height="711" fill="#96989b"/><rect x="788" y="895" width="1" height="150" fill="#a6a8ab"/><rect x="788" y="158" width="1" height="25" fill="#f4f4f4"/><rect x="820" y="183" width="1" height="711" fill="#373b3f"/><rect x="820" y="895" width="1" height="150" fill="#4a4e52"/><rect x="820" y="158" width="1" height="9" fill="#5a5d61"/><rect x="853" y="183" width="1" height="711" fill="#373b3f"/><rect x="853" y="895" width="1" height="150" fill="#4a4e52"/><rect x="853" y="158" width="1" height="9" fill="#5a5d61"/><rect x="886" y="183" width="1" height="711" fill="#373b3f"/><rect x="886" y="895" width="1" height="150" fill="#4a4e52"/><rect x="886" y="158" width="1" height="9" fill="#5a5d61"/><rect x="918" y="183" width="1" height="711" fill="#5a5e62"/><rect x="918" y="895" width="1" height="150" fill="#6a6e72"/><rect x="918" y="158" width="1" height="9" fill="#c8c8c8"/><rect x="951" y="183" width="1" height="711" fill="#373b3f"/><rect x="951" y="895" width="1" height="150" fill="#4a4e52"/><rect x="951" y="158" width="1" height="9" fill="#5a5d61"/><rect x="984" y="183" width="1" height="711" fill="#373b3f"/><rect x="984" y="895" width="1" height="150" fill="#4a4e52"/><rect x="984" y="158" width="1" height="9" fill="#5a5d61"/><rect x="1016" y="183" width="1" height="711" fill="#373b3f"/><rect x="1016" y="895" width="1" height="150" fill="#4a4e52"/><rect x="1016" y="158" width="1" height="9" fill="#5a5d61"/><rect x="1049" y="183" width="1" height="711" fill="#5a5e62"/><rect x="1049" y="895" width="1" height="150" fill="#6a6e72"/><rect x="1049" y="158" width="1" height="9" fill="#c8c8c8"/><rect x="1082" y="183" width="1" height="711" fill="#373b3f"/><rect x="1082" y="895" width="1" height="150" fill="#4a4e52"/><rect x="1082" y="158" width="1" height="9" fill="#5a5d61"/><rect x="1114" y="183" width="1" height="711" fill="#373b3f"/><rect x="1114" y="895" width="1" height="150" fill="#4a4e52"/><rect x="1114" y="158" width="1" height="9" fill="#5a5d61"/><rect x="1147" y="183" width="1" height="711" fill="#373b3f"/><rect x="1147" y="895" width="1" height="150" fill="#4a4e52"/><rect x="1147" y="158" width="1" height="9" fill="#5a5d61"/><rect x="1180" y="183" width="1" height="711" fill="#5a5e62"/><rect x="1180" y="895" width="1" height="150" fill="#6a6e72"/><rect x="1180" y="158" width="1" height="9" fill="#c8c8c8"/><rect x="1212" y="183" width="1" height="711" fill="#373b3f"/><rect x="1212" y="895" width="1" height="150" fill="#4a4e52"/><rect x="1212" y="158" width="1" height="9" fill="#5a5d61"/><rect x="1245" y="183" width="1" height="711" fill="#373b3f"/><rect x="1245" y="895" width="1" height="150" fill="#4a4e52"/><rect x="1245" y="158" width="1" height="9" fill="#5a5d61"/><rect x="1278" y="183" width="1" height="711" fill="#373b3f"/><rect x="1278" y="895" width="1" height="150" fill="#4a4e52"/><rect x="1278" y="158" width="1" height="9" fill="#5a5d61"/><rect x="1310" y="183" width="1" height="711" fill="#96989b"/><rect x="1310" y="895" width="1" height="150" fill="#a6a8ab"/><rect x="1310" y="158" width="1" height="25" fill="#f4f4f4"/><rect x="1343" y="183" width="1" height="711" fill="#373b3f"/><rect x="1343" y="895" width="1" height="150" fill="#4a4e52"/><rect x="1343" y="158" width="1" height="9" fill="#5a5d61"/><rect x="1376" y="183" width="1" height="711" fill="#373b3f"/><rect x="1376" y="895" width="1" height="150" fill="#4a4e52"/><rect x="1376" y="158" width="1" height="9" fill="#5a5d61"/><rect x="1408" y="183" width="1" height="711" fill="#373b3f"/><rect x="1408" y="895" width="1" height="150" fill="#4a4e52"/><rect x="1408" y="158" width="1" height="9" fill="#5a5d61"/><rect x="1441" y="183" width="1" height="711" fill="#5a5e62"/><rect x="1441" y="895" width="1" height="150" fill="#6a6e72"/><rect x="1441" y="158" width="1" height="9" fill="#c8c8c8"/><rect x="1474" y="183" width="1" height="711" fill="#373b3f"/><rect x="1474" y="895" width="1" height="150" fill="#4a4e52"/><rect x="1474" y="158" width="1" height="9" fill="#5a5d61"/><rect x="1506" y="183" width="1" height="711" fill="#373b3f"/><rect x="1506" y="895" width="1" height="150" fill="#4a4e52"/><rect x="1506" y="158" width="1" height="9" fill="#5a5d61"/><rect x="1539" y="183" width="1" height="711" fill="#373b3f"/><rect x="1539" y="895" width="1" height="150" fill="#4a4e52"/><rect x="1539" y="158" width="1" height="9" fill="#5a5d61"/><rect x="1572" y="183" width="1" height="711" fill="#5a5e62"/><rect x="1572" y="895" width="1" height="150" fill="#6a6e72"/><rect x="1572" y="158" width="1" height="9" fill="#c8c8c8"/><rect x="1604" y="183" width="1" height="711" fill="#373b3f"/><rect x="1604" y="895" width="1" height="150" fill="#4a4e52"/><rect x="1604" y="158" width="1" height="9" fill="#5a5d61"/><rect x="1637" y="183" width="1" height="711" fill="#373b3f"/><rect x="1637" y="895" width="1" height="150" fill="#4a4e52"/><rect x="1637" y="158" width="1" height="9" fill="#5a5d61"/><rect x="1670" y="183" width="1" height="711" fill="#373b3f"/><rect x="1670" y="895" width="1" height="150" fill="#4a4e52"/><rect x="1670" y="158" width="1" height="9" fill="#5a5d61"/><rect x="1702" y="183" width="1" height="711" fill="#5a5e62"/><rect x="1702" y="895" width="1" height="150" fill="#6a6e72"/><rect x="1702" y="158" width="1" height="9" fill="#c8c8c8"/><rect x="1735" y="183" width="1" height="711" fill="#373b3f"/><rect x="1735" y="895" width="1" height="150" fill="#4a4e52"/><rect x="1735" y="158" width="1" height="9" fill="#5a5d61"/><rect x="1768" y="183" width="1" height="711" fill="#373b3f"/><rect x="1768" y="895" width="1" height="150" fill="#4a4e52"/><rect x="1768" y="158" width="1" height="9" fill="#5a5d61"/><rect x="1800" y="183" width="1" height="711" fill="#373b3f"/><rect x="1800" y="895" width="1" height="150" fill="#4a4e52"/><rect x="1800" y="158" width="1" height="9" fill="#5a5d61"/><rect x="1833" y="183" width="1" height="711" fill="#96989b"/><rect x="1833" y="895" width="1" height="150" fill="#a6a8ab"/><rect x="1833" y="158" width="1" height="25" fill="#f4f4f4"/><rect x="1866" y="183" width="1" height="711" fill="#373b3f"/><rect x="1866" y="895" width="1" height="150" fill="#4a4e52"/><rect x="1866" y="158" width="1" height="9" fill="#5a5d61"/><rect x="265" y="893" width="1646" height="2" fill="#6c6f73"/><rect x="265" y="986" width="1646" height="2" fill="#6c6f73"/><rect x="1433" y="158" width="2" height="880" fill="#e8e8e8"/></svg>
<span class="t" id="t59" style="left:397px;top:168.5px;font-size:10px;line-height:14px;color:#e4e4e4;transform:scaleX(0.9444);transform-origin:left center;letter-spacing:1.5px;font-family:"Liberation Mono",monospace;">5.2</span>
<span class="t" id="t60" style="left:527px;top:168.5px;font-size:10px;line-height:14px;color:#e4e4e4;transform:scaleX(0.9444);transform-origin:left center;letter-spacing:1.5px;font-family:"Liberation Mono",monospace;">5.3</span>
<span class="t" id="t61" style="left:658px;top:168.5px;font-size:10px;line-height:14px;color:#e4e4e4;transform:scaleX(0.9444);transform-origin:left center;letter-spacing:1.5px;font-family:"Liberation Mono",monospace;">5.4</span>
<span class="t" id="t62" style="left:919px;top:168.5px;font-size:10px;line-height:14px;color:#e4e4e4;transform:scaleX(0.9444);transform-origin:left center;letter-spacing:1.5px;font-family:"Liberation Mono",monospace;">6.2</span>
<span class="t" id="t63" style="left:1050px;top:168.5px;font-size:10px;line-height:14px;color:#e4e4e4;transform:scaleX(0.9444);transform-origin:left center;letter-spacing:1.5px;font-family:"Liberation Mono",monospace;">6.3</span>
<span class="t" id="t64" style="left:1181px;top:168.5px;font-size:10px;line-height:14px;color:#e4e4e4;transform:scaleX(0.9444);transform-origin:left center;letter-spacing:1.5px;font-family:"Liberation Mono",monospace;">6.4</span>
<span class="t" id="t65" style="left:1442px;top:168.5px;font-size:10px;line-height:14px;color:#e4e4e4;transform:scaleX(0.9444);transform-origin:left center;letter-spacing:1.5px;font-family:"Liberation Mono",monospace;">7.2</span>
<span class="t" id="t66" style="left:1573px;top:168.5px;font-size:10px;line-height:14px;color:#e4e4e4;transform:scaleX(0.9444);transform-origin:left center;letter-spacing:1.5px;font-family:"Liberation Mono",monospace;">7.3</span>
<span class="t" id="t67" style="left:1703px;top:168.5px;font-size:10px;line-height:14px;color:#e4e4e4;transform:scaleX(0.9444);transform-origin:left center;letter-spacing:1.5px;font-family:"Liberation Mono",monospace;">7.4</span>
<span class="t" id="t68" style="left:793px;top:166px;font-size:12px;line-height:17px;color:#f4f4f4;font-weight:700;transform:scaleX(1.0000);transform-origin:left center;font-family:"Liberation Serif",serif;">6</span>
<span class="t" id="t69" style="left:1315px;top:166px;font-size:12px;line-height:17px;color:#f4f4f4;font-weight:700;transform:scaleX(1.0000);transform-origin:left center;font-family:"Liberation Serif",serif;">7</span>
<span class="t" id="t70" style="left:1838px;top:166px;font-size:12px;line-height:17px;color:#f4f4f4;font-weight:700;transform:scaleX(1.0000);transform-origin:left center;font-family:"Liberation Serif",serif;">8</span>
<div style="left:265px;top:167px;width:97px;height:16px;background:#25282c;box-shadow:inset -1px 1px 0 0 #4c4f54;"></div>
<span class="t" id="t71" style="left:271px;top:167px;font-size:11.5px;line-height:16px;color:#cfcfcf;font-weight:700;transform:scaleX(0.9341);transform-origin:left center;">HALion Sonic 01</span>
<div style="left:526px;top:331.5px;width:131px;height:14.5px;background:#742f3d;box-shadow:inset 0 0 0 1px #22090e;"></div><span class="t" id="t72" style="left:530px;top:332.5px;font-size:9.5px;line-height:13px;color:#ecd4d8;">E3</span>
<div style="left:1049px;top:316.5px;width:132px;height:14.5px;background:#742f3d;box-shadow:inset 0 0 0 1px #22090e;"></div><span class="t" id="t73" style="left:1053px;top:317.5px;font-size:9.5px;line-height:13px;color:#ecd4d8;">F3</span>
<div style="left:984px;top:361.5px;width:197px;height:14.5px;background:#742f3d;box-shadow:inset 0 0 0 1px #22090e;"></div><span class="t" id="t74" style="left:988px;top:362.5px;font-size:9.5px;line-height:13px;color:#ecd4d8;">D3</span>
<div style="left:330px;top:511.5px;width:106px;height:14.5px;background:#742f3d;box-shadow:inset 0 0 0 1px #22090e;"></div><span class="t" id="t75" style="left:334px;top:512.5px;font-size:9.5px;line-height:13px;color:#ecd4d8;">E2</span>
<div style="left:265px;top:571.5px;width:171px;height:14.5px;background:#742f3d;box-shadow:inset 0 0 0 1px #22090e;"></div><span class="t" id="t76" style="left:269px;top:572.5px;font-size:9.5px;line-height:13px;color:#ecd4d8;">C2</span>
<div style="left:1833px;top:571.5px;width:65px;height:14.5px;background:#742f3d;box-shadow:inset 0 0 0 1px #22090e;"></div><span class="t" id="t77" style="left:1837px;top:572.5px;font-size:9.5px;line-height:13px;color:#ecd4d8;">C2</span>
<div style="left:1560px;top:406.5px;width:142px;height:14.5px;background:#742f3d;box-shadow:inset 0 0 0 1px #22090e;"></div>
<div style="left:1560px;top:466.5px;width:142px;height:14.5px;background:#742f3d;box-shadow:inset 0 0 0 1px #22090e;"></div>
<div style="left:1560px;top:541.5px;width:142px;height:14.5px;background:#742f3d;box-shadow:inset 0 0 0 1px #22090e;"></div>
<div style="left:1560px;top:586.5px;width:142px;height:14.5px;background:#742f3d;box-shadow:inset 0 0 0 1px #22090e;"></div>
<div style="left:1560px;top:646.5px;width:142px;height:14.5px;background:#742f3d;box-shadow:inset 0 0 0 1px #22090e;"></div>
<svg class="a" style="left:195px;top:183px" width="68" height="711" viewBox="0 0 68 711" shape-rendering="crispEdges"><rect x="0" y="0" width="67" height="711" fill="#b9babc"/><rect x="0" y="685" width="67" height="1" fill="#1b1c1e"/><rect x="0" y="659" width="67" height="1" fill="#1b1c1e"/><rect x="0" y="634" width="67" height="1" fill="#1b1c1e"/><rect x="0" y="608" width="67" height="1" fill="#1b1c1e"/><rect x="0" y="582" width="67" height="1" fill="#1b1c1e"/><rect x="0" y="557" width="67" height="1" fill="#1b1c1e"/><rect x="0" y="531" width="67" height="1" fill="#1b1c1e"/><rect x="0" y="505" width="67" height="1" fill="#1b1c1e"/><rect x="0" y="479" width="67" height="1" fill="#1b1c1e"/><rect x="0" y="454" width="67" height="1" fill="#1b1c1e"/><rect x="0" y="428" width="67" height="1" fill="#1b1c1e"/><rect x="0" y="402" width="67" height="1" fill="#1b1c1e"/><rect x="0" y="377" width="67" height="1" fill="#1b1c1e"/><rect x="0" y="351" width="67" height="1" fill="#1b1c1e"/><rect x="0" y="325" width="67" height="1" fill="#1b1c1e"/><rect x="0" y="299" width="67" height="1" fill="#1b1c1e"/><rect x="0" y="274" width="67" height="1" fill="#1b1c1e"/><rect x="0" y="248" width="67" height="1" fill="#1b1c1e"/><rect x="0" y="222" width="67" height="1" fill="#1b1c1e"/><rect x="0" y="197" width="67" height="1" fill="#1b1c1e"/><rect x="0" y="171" width="67" height="1" fill="#1b1c1e"/><rect x="0" y="145" width="67" height="1" fill="#1b1c1e"/><rect x="0" y="119" width="67" height="1" fill="#1b1c1e"/><rect x="0" y="94" width="67" height="1" fill="#1b1c1e"/><rect x="0" y="68" width="67" height="1" fill="#1b1c1e"/><rect x="0" y="42" width="67" height="1" fill="#1b1c1e"/><rect x="0" y="17" width="67" height="1" fill="#1b1c1e"/><rect x="0" y="12" width="38" height="13.8" fill="#1a1b1d"/><rect x="0" y="192" width="38" height="13.8" fill="#1a1b1d"/><rect x="0" y="164" width="38" height="13.8" fill="#1a1b1d"/><rect x="0" y="114" width="38" height="13.8" fill="#1a1b1d"/><rect x="0" y="86" width="38" height="13.8" fill="#1a1b1d"/><rect x="0" y="60" width="38" height="13.8" fill="#1a1b1d"/><rect x="0" y="372" width="38" height="13.8" fill="#1a1b1d"/><rect x="0" y="344" width="38" height="13.8" fill="#1a1b1d"/><rect x="0" y="294" width="38" height="13.8" fill="#1a1b1d"/><rect x="0" y="266" width="38" height="13.8" fill="#1a1b1d"/><rect x="0" y="240" width="38" height="13.8" fill="#1a1b1d"/><rect x="0" y="552" width="38" height="13.8" fill="#1a1b1d"/><rect x="0" y="524" width="38" height="13.8" fill="#1a1b1d"/><rect x="0" y="474" width="38" height="13.8" fill="#1a1b1d"/><rect x="0" y="446" width="38" height="13.8" fill="#1a1b1d"/><rect x="0" y="420" width="38" height="13.8" fill="#1a1b1d"/><rect x="0" y="704" width="38" height="13.8" fill="#1a1b1d"/><rect x="0" y="654" width="38" height="13.8" fill="#1a1b1d"/><rect x="0" y="626" width="38" height="13.8" fill="#1a1b1d"/><rect x="0" y="600" width="38" height="13.8" fill="#1a1b1d"/></svg>
<span class="t" id="t78" style="left:238px;top:208.5px;font-size:12px;line-height:17px;color:#222426;transform:scaleX(1.0667);transform-origin:left center;">C4</span>
<span class="t" id="t79" style="left:238px;top:388.5px;font-size:12px;line-height:17px;color:#222426;transform:scaleX(1.0667);transform-origin:left center;">C3</span>
<span class="t" id="t80" style="left:238px;top:568.5px;font-size:12px;line-height:17px;color:#222426;transform:scaleX(1.0667);transform-origin:left center;">C2</span>
<span class="t" id="t81" style="left:238px;top:748.5px;font-size:12px;line-height:17px;color:#222426;transform:scaleX(1.0667);transform-origin:left center;">C1</span>
<div style="left:195px;top:894.5px;width:68px;height:29px;background:#24272b;box-shadow:inset 0 0 0 1px #606367;"></div>
<span class="t" id="t82" style="left:199px;top:896px;font-size:8.5px;line-height:12px;color:#e0e0e0;font-weight:700;transform:scaleX(0.7843);transform-origin:left center;">ベロシティー</span>
<div style="left:195px;top:987px;width:68px;height:29px;background:#24272b;box-shadow:inset 0 0 0 1px #606367;"></div>
<span class="t" id="t83" style="left:199px;top:988px;font-size:9px;line-height:13px;color:#e0e0e0;font-weight:700;transform:scaleX(0.9574);transform-origin:left center;">Brightness</span>
<span class="t" id="t84" style="left:199px;top:1002px;font-size:9px;line-height:13px;color:#e0e0e0;font-weight:700;transform:scaleX(1.0385);transform-origin:left center;">CC 74</span>
<div style="left:1898px;top:158px;width:13px;height:22px;background:#303337;border-radius:3px;box-shadow:inset 0 0 0 1px #4c4f54;"></div>
<svg class="a" style="left:1900px;top:165px" width="9" height="8" viewBox="0 0 9 8"><path d="M0.5 0.5 H8.5 L4.5 7.5Z" fill="#e0e0e0"/></svg>
<div style="left:1898px;top:183px;width:12px;height:629px;background:#3f4245;border-radius:2px;"></div>
<svg class="a" style="left:1900px;top:187px" width="8" height="6" viewBox="0 0 8 6"><path d="M1 5 L4 2 L7 5" fill="none" stroke="#e8e8e8" stroke-width="1.3"/></svg>
<svg class="a" style="left:1900px;top:800px" width="8" height="6" viewBox="0 0 8 6"><path d="M1 1 L4 4 L7 1" fill="none" stroke="#e8e8e8" stroke-width="1.3"/></svg>
<div style="left:1900px;top:449px;width:8px;height:216px;background:#f4f4f6;border-radius:3px;"></div>
<div style="left:1898px;top:815px;width:12px;height:77px;background:#34373b;border-radius:2px;"></div>
<div style="left:1900px;top:821px;width:8px;height:2px;background:#f0f0f0;"></div>
<div style="left:1903px;top:831px;width:1px;height:45px;background:#6a6d70;"></div>
<div style="left:1900px;top:856px;width:8px;height:8px;background:#f4f4f4;border-radius:50%;"></div>
<div style="left:1900px;top:884px;width:8px;height:2px;background:#f0f0f0;"></div>
<div style="left:1903px;top:881px;width:2px;height:8px;background:#f0f0f0;"></div>
<div style="left:1898px;top:896px;width:12px;height:89px;background:#34373b;border-radius:2px;"></div>
<div style="left:1898px;top:989px;width:12px;height:50px;background:#34373b;border-radius:2px;"></div>
<svg class="a" style="left:1900px;top:902px" width="8" height="6" viewBox="0 0 8 6"><path d="M1 5 L4 2 L7 5" fill="none" stroke="#5c5f63" stroke-width="1.2"/></svg>
<svg class="a" style="left:1900px;top:974px" width="8" height="6" viewBox="0 0 8 6"><path d="M1 1 L4 4 L7 1" fill="none" stroke="#5c5f63" stroke-width="1.2"/></svg>
<svg class="a" style="left:1900px;top:995px" width="8" height="6" viewBox="0 0 8 6"><path d="M1 5 L4 2 L7 5" fill="none" stroke="#5c5f63" stroke-width="1.2"/></svg>
<svg width="0" height="0" style="position:absolute"><defs>
<symbol id="i-hash" viewBox="0 0 24 24"><path d="M9.5 3.5 L7 20.5 M16 3.5 L13.5 20.5 M3.5 8.5 H20 M2.5 15.5 H19" stroke="currentColor" stroke-width="2.4" stroke-linecap="round" fill="none"/><circle cx="20" cy="4.5" r="3.6" fill="currentColor"/></symbol>
<symbol id="i-forum" viewBox="0 0 24 24"><path d="M9 1.5 C13.5 1.5 16.5 4.5 16.5 8.3 C13 8 9.5 10.5 9.3 14.8 C8.2 14.9 7 14.8 6 14.4 L2 16.5 L3.2 12.5 C2 11.3 1.5 9.9 1.5 8.3 C1.5 4.5 4.5 1.5 9 1.5Z" fill="currentColor"/><path d="M16.3 9.8 C20 9.8 22.8 12.3 22.8 15.6 C22.8 17 22.3 18.2 21.4 19.2 L22.5 22.8 L18.8 21 C18 21.3 17.2 21.4 16.3 21.4 C12.6 21.4 10.6 18.8 10.6 15.6 C10.6 12.3 12.6 9.8 16.3 9.8Z" fill="currentColor"/><circle cx="20" cy="4.6" r="3.3" fill="currentColor"/></symbol>
<symbol id="i-spk" viewBox="0 0 24 24"><path d="M1 8.5 H5.5 L12 2.5 V21.5 L5.5 15.5 H1Z" fill="currentColor"/><path d="M15 7.5 A6.5 6.5 0 0 1 15 16.5" stroke="currentColor" stroke-width="2.6" fill="none" stroke-linecap="round"/><path d="M16.5 1.5 H22.5 V7 C22.5 9 20 10 19 8.5 L17 10.5" fill="currentColor"/><path d="M17.5 20 L21.5 14.5" stroke="currentColor" stroke-width="2" stroke-linecap="round"/></symbol>
<symbol id="i-micoff" viewBox="0 0 24 24"><rect x="8.8" y="2.8" width="6.4" height="11.4" rx="3.2" fill="none" stroke="currentColor" stroke-width="1.9"/><path d="M5.3 11 A6.7 6.7 0 0 0 18.7 11 M12 17.8 V21.3" stroke="currentColor" stroke-width="1.9" fill="none" stroke-linecap="round"/><path d="M20.5 2.8 L4 21.2" stroke="currentColor" stroke-width="1.9" stroke-linecap="round"/></symbol>
<symbol id="i-pad" viewBox="0 0 24 24"><path d="M7 5 H17 C20 5 21.5 8 22 12 L22.8 17 C23 20 19.8 21 18.5 18.8 L16.8 16 H7.2 L5.5 18.8 C4.2 21 1 20 1.2 17 L2 12 C2.5 8 4 5 7 5Z" fill="currentColor"/></symbol>
<symbol id="i-webm" viewBox="0 0 24 24"><ellipse cx="12" cy="12" rx="10" ry="6.8" transform="rotate(-28 12 12)" fill="#dcb8f8" stroke="#8c48d8" stroke-width="2.2"/><path d="M4.5 17.5 C9 16.5 15 12 19.5 6.5" stroke="#8c48d8" stroke-width="1.8" fill="none"/></symbol>
</defs></svg>
<div class="a" id="dc" style="left:394px;top:383px;width:1204.5px;height:660px;background:linear-gradient(180deg,#6eff6e 0%,#74ff8a 12%,#80ffb0 26%,#80fff0 49%,#82dcfa 65%,#80bfff 77%,#7b9cff 88%,#7b78ff 100%);">
<div class="a" style="left:541px;top:5px;width:11px;height:11px;background:#3a4a7a;border-radius:3px;"></div>
<div class="a" style="left:544px;top:7px;width:5px;height:5px;background:#e8c090;border-radius:50%;"></div>
<span class="t" id="t85" style="left:558px;top:3.5px;font-size:9px;line-height:13px;color:#1f3a2a;font-weight:500;transform:scaleX(0.9722);transform-origin:left center;">ウェブマニア公式サーバー</span>
<svg class="a" style="left:1078px;top:4px" width="13" height="12" viewBox="0 0 13 12"><path d="M1.5 1.5 H11.5 V10.5 H1.5Z M1.5 6.5 H4.5 A2 2 0 0 0 8.5 6.5 H11.5" fill="none" stroke="#1c2b25" stroke-width="1.5"/><path d="M1.5 7 H4 A2.5 2.5 0 0 0 9 7 H11.5 V10.5 H1.5Z" fill="#1c2b25"/></svg>
<div class="a" style="left:1107px;top:4px;width:12px;height:12px;background:#1c2b25;border-radius:50%;"></div>
<span class="t" id="t86" style="left:1110.5px;top:3.7px;font-size:9px;line-height:13px;color:#7cff7c;font-weight:700;">?</span>
<div class="a" style="left:1145px;top:10px;width:8px;height:1px;background:rgba(20,70,40,.75);"></div>
<div class="a" style="left:1168.5px;top:7px;width:6.5px;height:6.5px;box-shadow:inset 0 0 0 1px rgba(20,70,40,.75);"></div>
<svg class="a" style="left:1190px;top:6px" width="8" height="8" viewBox="0 0 8 8"><path d="M0.8 0.8 L7.2 7.2 M7.2 0.8 L0.8 7.2" stroke="rgba(20,70,40,.75)" stroke-width="0.9"/></svg>
<div class="a" style="left:13px;top:30px;width:25px;height:25px;background:#000;border-radius:7px;overflow:hidden;"><svg class="a" style="left:4px;top:6px" width="17" height="13" viewBox="0 0 17 13"><path d="M1 4 A3.3 3.3 0 1 1 6 6.8 C5.6 9 4.2 10.8 2 12 L1.2 11 C2.6 10 3.4 8.8 3.6 7.4 A3.3 3.3 0 0 1 1 4Z M9.3 4 A3.3 3.3 0 1 1 14.3 6.8 C13.9 9 12.5 10.8 10.3 12 L9.5 11 C10.9 10 11.7 8.8 11.9 7.4 A3.3 3.3 0 0 1 9.3 4Z" fill="#fff"/></svg></div>
<div class="a" style="left:13px;top:62px;width:25px;height:25px;background:rgba(130,215,160,.5);border-radius:8px;"></div>
<span class="t" id="t87" style="left:13px;top:68.5px;font-size:8.5px;line-height:12px;color:#1c3b2b;font-weight:500;transform:scaleX(0.9615);transform-origin:left center;">イデア</span>
<div class="a" style="left:13px;top:93px;width:25px;height:25px;background:#ee4444;border-radius:7px;overflow:hidden;"><svg class="a" style="left:4px;top:6px" width="17" height="13" viewBox="0 0 17 13"><path d="M3 1.5 C5 0.5 6 0.5 6.3 0.5 L6.8 1.5 H10.2 L10.7 0.5 C11 0.5 12 0.5 14 1.5 C16 4.5 16.8 8 16.5 10.5 C15 11.8 13.5 12.3 12.3 12.5 L11.3 11 C11.8 10.8 12.4 10.5 12.9 10.1 C10 11.3 7 11.3 4.1 10.1 C4.6 10.5 5.2 10.8 5.7 11 L4.7 12.5 C3.5 12.3 2 11.8 0.5 10.5 C0.2 8 1 4.5 3 1.5Z" fill="#fff"/><ellipse cx="5.9" cy="7" rx="1.5" ry="1.7" fill="#ee4444"/><ellipse cx="11.1" cy="7" rx="1.5" ry="1.7" fill="#ee4444"/></svg></div>
<div class="a" style="left:13px;top:124px;width:25px;height:25px;background:#e4dede;border-radius:7px;overflow:hidden;"><svg class="a" style="left:0;top:0;overflow:hidden" width="25" height="25" viewBox="0 0 50 50"><defs><clipPath id="av1"><circle cx="25" cy="25" r="25"/></clipPath></defs><rect width="50" height="50" fill="#e4dede"/>
<path d="M0 50 V30 C4 10 20 2 32 4 C44 6 50 18 50 30 V50Z" fill="#f0ecec"/>
<path d="M6 50 C2 30 12 10 28 8 C20 16 16 30 20 50Z" fill="#c8c0c0"/>
<path d="M24 14 C34 10 46 16 46 28 C46 40 40 46 32 46 C24 46 20 36 20 28 C20 22 21 17 24 14Z" fill="#1e1c20"/>
<rect x="30" y="22" width="14" height="6" rx="1.5" fill="#d8d8ec"/>
<path d="M0 40 C6 38 10 44 8 50 H0Z" fill="#3a3434"/>
<path d="M10 36 C14 40 12 46 16 50" stroke="#9a9090" stroke-width="1.2" fill="none"/></svg></div>
<div class="a" style="left:13px;top:155px;width:25px;height:25px;background:rgba(130,220,175,.5);border-radius:8px;"></div>
<span class="t" id="t88" style="left:13px;top:162.5px;font-size:7px;line-height:10px;color:#1c3b2b;font-weight:700;transform:scaleX(0.9615);transform-origin:left center;">›ーゆー•</span>
<div class="a" style="left:13px;top:187px;width:25px;height:25px;background:rgba(130,220,185,.5);border-radius:8px;"></div>
<span class="t" id="t89" style="left:13px;top:194px;font-size:8px;line-height:11px;color:#1c3b2b;font-weight:500;transform:scaleX(1.0417);transform-origin:left center;">ﾛサーﾊ</span>
<div class="a" style="left:13px;top:218px;width:25px;height:25px;background:#48c8e8;border-radius:7px;overflow:hidden;"><div class="a" style="left:0px;top:4px;width:10px;height:8px;background:#1e5060;border-radius:3px 3px 5px 5px;"></div><div class="a" style="left:14px;top:4px;width:10px;height:8px;background:#1e5060;border-radius:3px 3px 5px 5px;"></div><div class="a" style="left:8px;top:14px;width:7px;height:6px;border:1.5px solid #1e5060;border-top:none;border-radius:0 0 5px 5px;"></div></div>
<div class="a" style="left:13px;top:250px;width:25px;height:25px;background:#f6f2f4;border-radius:7px;overflow:hidden;"><div class="a" style="left:2px;top:4px;width:21px;height:3px;background:#d03050;"></div><div class="a" style="left:2px;top:9px;width:21px;height:3px;background:#3050b0;"></div><div class="a" style="left:2px;top:14px;width:21px;height:3px;background:#d03050;"></div><div class="a" style="left:2px;top:19px;width:21px;height:2px;background:#888;"></div></div>
<div class="a" style="left:13px;top:281px;width:25px;height:25px;background:#4a78d0;border-radius:7px;overflow:hidden;"><div class="a" style="left:0px;top:0px;width:25px;height:25px;background:radial-gradient(circle at 50% 40%,#e8f0ff 0 25%,#7aa8e8 60%,#3060c0 100%);"></div><div class="a" style="left:8px;top:5px;width:9px;height:9px;background:#e8b898;border-radius:50%;"></div><div class="a" style="left:4px;top:13px;width:17px;height:12px;background:#283050;border-radius:6px 6px 0 0;"></div><div class="a" style="left:2px;top:21px;width:21px;height:3px;background:#a030b0;"></div></div>
<div class="a" style="left:13px;top:312px;width:25px;height:25px;background:#1a1a3a;border-radius:7px;overflow:hidden;"><div class="a" style="left:8px;top:4px;width:10px;height:9px;background:#f0c8a8;border-radius:50%;"></div><div class="a" style="left:5px;top:12px;width:15px;height:9px;background:#4890e0;border-radius:5px 5px 0 0;"></div><div class="a" style="left:2px;top:20px;width:21px;height:3px;background:#d02030;"></div><div class="a" style="left:15px;top:-1px;width:10px;height:8px;background:#fff;border-radius:4px;border:1.5px solid #28a048;"></div></div>
<div class="a" style="left:13px;top:344px;width:25px;height:25px;background:#c8d0e0;border-radius:7px;overflow:hidden;"><div class="a" style="left:5px;top:2px;width:15px;height:12px;background:#f0e8d8;border-radius:50%;"></div><div class="a" style="left:8px;top:7px;width:9px;height:9px;background:#f8e0d0;border-radius:50%;"></div><div class="a" style="left:4px;top:15px;width:17px;height:10px;background:#6878a8;border-radius:5px 5px 0 0;"></div></div>
<div class="a" style="left:13px;top:375px;width:25px;height:25px;background:#a0c0e8;border-radius:7px;overflow:hidden;"><div class="a" style="left:0px;top:0px;width:25px;height:25px;background:linear-gradient(135deg,#9ad0f0 0%,#f0f4ff 45%,#8878c0 100%);"></div><div class="a" style="left:3px;top:5px;width:10px;height:11px;background:#5aa0e0;border-radius:50%;"></div><div class="a" style="left:13px;top:9px;width:9px;height:10px;background:#584880;border-radius:50%;"></div></div>
<div class="a" style="left:13px;top:406px;width:25px;height:25px;background:#fff;border-radius:7px;overflow:hidden;"><svg class="a" style="left:5px;top:4px" width="15" height="17" viewBox="0 0 15 17" fill="none" stroke="#8cc8b8" stroke-width="1.2"><rect x="2" y="3" width="11" height="8"/><path d="M7.5 0.5 V3 M4 11 L2.5 16.5 M11 11 L12.5 16.5 M7.5 11 V14 M4 5.5 H11 M5 8 H10"/></svg></div>
<div class="a" style="left:13px;top:437px;width:25px;height:25px;background:#a08070;border-radius:7px;overflow:hidden;"><div class="a" style="left:0px;top:0px;width:25px;height:13px;background:#8a8088;"></div><div class="a" style="left:4px;top:5px;width:17px;height:14px;background:#f4f4f4;border-radius:6px 6px 8px 8px;"></div><div class="a" style="left:5px;top:9px;width:7px;height:4px;background:#111;border-radius:1px 1px 3px 3px;"></div><div class="a" style="left:13px;top:9px;width:7px;height:4px;background:#111;border-radius:1px 1px 3px 3px;"></div><div class="a" style="left:4px;top:3px;width:5px;height:6px;background:#f4f4f4;border-radius:2px 5px 0 0;"></div><div class="a" style="left:16px;top:3px;width:5px;height:6px;background:#f4f4f4;border-radius:5px 2px 0 0;"></div></div>
<div class="a" style="left:13px;top:469px;width:25px;height:25px;background:rgba(255,255,255,.12);border-radius:8px;"></div>
<div class="a" style="left:20px;top:476px;width:11px;height:11px;background:#0f1c2c;border-radius:50%;"></div>
<div class="a" style="left:22.5px;top:481px;width:6px;height:1px;background:#9fd8ff;"></div>
<div class="a" style="left:25px;top:478.5px;width:1px;height:6px;background:#9fd8ff;"></div>
<div class="a" style="left:13px;top:500px;width:25px;height:25px;background:rgba(255,255,255,.12);border-radius:8px;"></div>
<div class="a" style="left:20px;top:507px;width:11px;height:11px;background:#0f1c2c;border-radius:50%;"></div>
<div class="a" style="left:23px;top:510px;width:5px;height:5px;border:1.3px solid #9fd8ff;border-radius:2px;transform:skewX(-15deg);"></div>
<div class="a" style="left:0px;top:102.5px;width:3px;height:5px;background:#12201c;border-radius:0 3px 3px 0;"></div>
<div class="a" style="left:0px;top:133.0px;width:3px;height:5px;background:#12201c;border-radius:0 3px 3px 0;"></div>
<div class="a" style="left:0px;top:290.0px;width:3px;height:5px;background:#12201c;border-radius:0 3px 3px 0;"></div>
<div class="a" style="left:0px;top:353.0px;width:3px;height:5px;background:#12201c;border-radius:0 3px 3px 0;"></div>
<div class="a" style="left:0px;top:383.5px;width:3px;height:5px;background:#12201c;border-radius:0 3px 3px 0;"></div>
<div class="a" style="left:0px;top:414.5px;width:3px;height:5px;background:#12201c;border-radius:0 3px 3px 0;"></div>
<div class="a" style="left:0px;top:312px;width:3px;height:24px;background:#12201c;border-radius:0 3px 3px 0;"></div>
<div class="a" style="left:52px;top:21px;width:219px;height:640px;background:rgba(255,255,255,.10);border-radius:8px 0 0 0;"></div>
<div class="a" style="left:52px;top:51px;width:219px;height:1px;background:rgba(0,60,30,.10);"></div>
<div class="a" style="left:64px;top:30px;width:11px;height:11px;background:linear-gradient(135deg,#a88ae8,#f088a8);border-radius:50%;"><svg class="a" style="left:2.5px;top:2.2px" width="6" height="6" viewBox="0 0 6 6"><path d="M3 0.3 L5.8 2.8 H5 V5.6 H3.8 V3.8 H2.2 V5.6 H1 V2.8 H0.2Z" fill="#fff"/></svg></div>
<span class="t" id="t90" style="left:82px;top:28.5px;font-size:10px;line-height:14px;color:#13241d;font-weight:700;transform:scaleX(1.0000);transform-origin:left center;">ウェブマニア公式サーバー</span>
<svg class="a" style="left:250px;top:32px" width="9" height="7" viewBox="0 0 9 7"><path d="M1 1.5 L4.5 5 L8 1.5" fill="none" stroke="#1c2b25" stroke-width="1.3"/></svg>
<div class="a" style="left:64px;top:53px;width:210px;height:3px;overflow:hidden;"><svg class="a" style="left:0px;top:-8px;color:#1c2b25" width="11" height="11"><use href="#i-hash"/></svg><div class="a" style="left:20px;top:-7px;width:10px;height:10px;background:#1fb86a;border-radius:2px;"></div><span class="t" id="t91" style="left:42px;top:-10px;font-size:10px;line-height:14px;color:rgba(22,50,48,.74);font-weight:500;">マニアに関するお知らせ</span></div>
<svg class="a" style="left:63.5px;top:67px;color:#1c2b25" width="12" height="12"><use href="#i-forum"/></svg><div class="a" style="left:84px;top:68px;width:10px;height:10px;background:#1fb86a;border-radius:2px;"><svg class="a" style="left:1.5px;top:2px" width="7" height="6" viewBox="0 0 7 6"><path d="M0.8 3 L2.8 5 L6.2 1" fill="none" stroke="#fff" stroke-width="1.3"/></svg></div><div class="a" style="left:100px;top:67.80000000000001px;width:1.5px;height:10.8px;background:rgba(18,45,38,.9);"></div><span class="t" id="t92" style="left:106px;top:66px;font-size:10px;line-height:14px;color:rgba(22,50,48,.74);font-weight:500;transform:scaleX(1.0000);transform-origin:left center;">ウェブマニア公式鯖</span>
<svg class="a" style="left:63.5px;top:91px;color:#1c2b25" width="12" height="12"><use href="#i-hash"/></svg><div class="a" style="left:84px;top:92px;width:10px;height:10px;background:#1fb86a;border-radius:2px;"><svg class="a" style="left:1.5px;top:2px" width="7" height="6" viewBox="0 0 7 6"><path d="M0.8 3 L2.8 5 L6.2 1" fill="none" stroke="#fff" stroke-width="1.3"/></svg></div><div class="a" style="left:100px;top:91.80000000000001px;width:1.5px;height:10.8px;background:rgba(18,45,38,.9);"></div><span class="t" id="t93" style="left:106px;top:90px;font-size:10px;line-height:14px;color:rgba(22,50,48,.74);font-weight:500;transform:scaleX(1.0000);transform-origin:left center;">マニア鯖お問い合わせ</span>
<div class="a" style="left:52px;top:117px;width:2.5px;height:6px;background:#12201a;border-radius:0 3px 3px 0;"></div>
<svg class="a" style="left:63.5px;top:115px;color:#1c2b25" width="12" height="12"><use href="#i-hash"/></svg><div class="a" style="left:84px;top:116px;width:10px;height:10px;background:#1fb86a;border-radius:2px;"><svg class="a" style="left:1.5px;top:2px" width="7" height="6" viewBox="0 0 7 6"><path d="M0.8 3 L2.8 5 L6.2 1" fill="none" stroke="#fff" stroke-width="1.3"/></svg></div><div class="a" style="left:100px;top:115.80000000000001px;width:1.5px;height:10.8px;background:rgba(18,45,38,.9);"></div><span class="t" id="t94" style="left:106px;top:114px;font-size:10px;line-height:14px;color:#12201a;font-weight:700;transform:scaleX(1.0000);transform-origin:left center;">ゲーム内チャット</span>
<svg class="a" style="left:63.5px;top:138.5px;color:#1c2b25" width="12" height="12"><use href="#i-forum"/></svg><svg class="a" style="left:83px;top:139.5px" width="9" height="9" viewBox="0 0 9 9"><path d="M1 8 L4.5 1 L8 8" fill="none" stroke="#1c2b25" stroke-width="1.2"/></svg><div class="a" style="left:98px;top:139.29999999999995px;width:1.5px;height:10.8px;background:rgba(18,45,38,.9);"></div><span class="t" id="t95" style="left:103px;top:137.5px;font-size:10px;line-height:14px;color:rgba(22,50,48,.74);font-weight:500;transform:scaleX(1.0000);transform-origin:left center;">マイクラ掲示板</span>
<div class="a" style="left:66px;top:171px;width:6px;height:6px;background:#f8b838;border-radius:1.5px;"></div><div class="a" style="left:68.39999999999998px;top:172.5px;width:1.3px;height:3px;background:#603010;"></div>
<span class="t" id="t96" style="left:76px;top:168px;font-size:8.5px;line-height:12px;color:rgba(22,50,48,.74);font-weight:500;transform:scaleX(1.0147);transform-origin:left center;">クリエイター交流</span>
<svg class="a" style="left:148px;top:172px" width="7" height="5" viewBox="0 0 7 5"><path d="M1 1 L3.5 3.5 L6 1" fill="none" stroke="rgba(22,50,48,.74)" stroke-width="1"/></svg>
<svg class="a" style="left:63.5px;top:187.5px;color:#1c2b25" width="12" height="12"><use href="#i-hash"/></svg><div class="a" style="left:84px;top:189.5px;width:10px;height:8px;background:#f4f6fa;border-radius:1px;border-bottom:1.5px solid #58a8e8;"></div><div class="a" style="left:88.60000000000002px;top:189.5px;width:0.8px;height:7px;background:#b8c0d0;"></div><div class="a" style="left:100px;top:188.29999999999995px;width:1.5px;height:10.8px;background:rgba(18,45,38,.9);"></div><span class="t" id="t97" style="left:106px;top:186.5px;font-size:10px;line-height:14px;color:rgba(22,50,48,.74);font-weight:500;transform:scaleX(1.0000);transform-origin:left center;">はじめに</span>
<svg class="a" style="left:63.5px;top:211.5px;color:#1c2b25" width="12" height="12"><use href="#i-forum"/></svg><div class="a" style="left:84px;top:215.5px;width:10px;height:7px;background:#6a3a90;border-radius:1px;"></div><div class="a" style="left:84px;top:212.5px;width:10px;height:3px;background:#3a2a4a;transform:rotate(-8deg);"></div><div class="a" style="left:100px;top:212.29999999999995px;width:1.5px;height:10.8px;background:rgba(18,45,38,.9);"></div><span class="t" id="t98" style="left:106px;top:210.5px;font-size:10px;line-height:14px;color:rgba(22,50,48,.74);font-weight:500;transform:scaleX(0.9744);transform-origin:left center;">youtuber</span>
<svg class="a" style="left:63.5px;top:235px;color:#1c2b25" width="12" height="12"><use href="#i-forum"/></svg><div class="a" style="left:85px;top:236px;width:8px;height:6px;background:#38b0f0;border-radius:1px;"></div><div class="a" style="left:84px;top:242px;width:10px;height:3px;background:#c0c4cc;border-radius:1px;"></div><div class="a" style="left:100px;top:235.79999999999995px;width:1.5px;height:10.8px;background:rgba(18,45,38,.9);"></div><span class="t" id="t99" style="left:106px;top:234px;font-size:10px;line-height:14px;color:rgba(22,50,48,.74);font-weight:500;transform:scaleX(1.0000);transform-origin:left center;">個人開発勢</span>
<div class="a" style="left:66px;top:268px;width:6px;height:6px;background:rgba(250,200,230,.55);border-radius:50%;"></div>
<span class="t" id="t100" style="left:76px;top:265px;font-size:8.5px;line-height:12px;color:rgba(22,50,48,.74);font-weight:500;transform:scaleX(1.0147);transform-origin:left center;">ボイスチャンネル</span>
<svg class="a" style="left:148px;top:269px" width="7" height="5" viewBox="0 0 7 5"><path d="M1 1 L3.5 3.5 L6 1" fill="none" stroke="rgba(22,50,48,.74)" stroke-width="1"/></svg>
<svg class="a" style="left:63.5px;top:284px;color:#1c2b25" width="12" height="12"><use href="#i-hash"/></svg><div class="a" style="left:84px;top:286px;width:10px;height:8px;background:#f4f6fa;border-radius:1px;border-bottom:1.5px solid #58a8e8;"></div><div class="a" style="left:88.60000000000002px;top:286px;width:0.8px;height:7px;background:#b8c0d0;"></div><div class="a" style="left:100px;top:284.79999999999995px;width:1.5px;height:10.8px;background:rgba(18,45,38,.9);"></div><span class="t" id="t101" style="left:106px;top:283px;font-size:10px;line-height:14px;color:rgba(22,50,48,.74);font-weight:500;transform:scaleX(1.0000);transform-origin:left center;">はじめに</span>
<svg class="a" style="left:63.5px;top:308px;color:#1c2b25" width="12" height="12"><use href="#i-hash"/></svg><div class="a" style="left:85px;top:310px;width:8px;height:9px;background:#f8c038;border-radius:4px 4px 5px 5px;"></div><div class="a" style="left:100px;top:308.79999999999995px;width:1.5px;height:10.8px;background:rgba(18,45,38,.9);"></div><span class="t" id="t102" style="left:106px;top:307px;font-size:10px;line-height:14px;color:rgba(22,50,48,.74);font-weight:500;transform:scaleX(1.0000);transform-origin:left center;">通話募集</span>
<svg class="a" style="left:63.5px;top:332px;color:#1c2b25" width="12" height="12"><use href="#i-spk"/></svg><div class="a" style="left:84px;top:334px;width:10px;height:8px;background:#fcfcfc;border-radius:50%;"></div><div class="a" style="left:100px;top:332.79999999999995px;width:1.5px;height:10.8px;background:rgba(18,45,38,.9);"></div><span class="t" id="t103" style="left:106px;top:331px;font-size:10px;line-height:14px;color:rgba(22,50,48,.74);font-weight:500;transform:scaleX(0.9412);transform-origin:left center;">総合VC</span>
<svg class="a" style="left:63.5px;top:355.5px;color:#1c2b25" width="12" height="12"><use href="#i-spk"/></svg><div class="a" style="left:84px;top:357.5px;width:10px;height:8px;background:#fcfcfc;border-radius:50%;"></div><div class="a" style="left:100px;top:356.29999999999995px;width:1.5px;height:10.8px;background:rgba(18,45,38,.9);"></div><span class="t" id="t104" style="left:106px;top:354.5px;font-size:10px;line-height:14px;color:rgba(22,50,48,.74);font-weight:500;transform:scaleX(0.9744);transform-origin:left center;">総合VC2</span>
<div class="a" style="left:57px;top:375px;width:209px;height:32px;background:rgba(185,195,215,.36);border-radius:5px;"></div>
<svg class="a" style="left:63.5px;top:379.5px;color:#1c2b25" width="12" height="12"><use href="#i-spk"/></svg><div class="a" style="left:84px;top:382.5px;width:3px;height:8px;background:#58b048;"></div><div class="a" style="left:87px;top:380.5px;width:3px;height:10px;background:#e8a028;"></div><div class="a" style="left:90px;top:383.5px;width:3px;height:7px;background:#4868d8;"></div><div class="a" style="left:92px;top:384.5px;width:2px;height:6px;background:#d84858;"></div><div class="a" style="left:100px;top:380.29999999999995px;width:1.5px;height:10.8px;background:rgba(18,45,38,.9);"></div><span class="t" id="t105" style="left:106px;top:378.5px;font-size:10px;line-height:14px;color:#12201a;font-weight:700;transform:scaleX(0.9255);transform-origin:left center;">VC作業（雑談あり）</span>
<span class="t" id="t106" style="left:82px;top:394.5px;font-size:7.5px;line-height:10px;color:rgba(22,50,48,.74);font-weight:500;transform:scaleX(1.0000);transform-origin:left center;">人生の大半は作業</span>
<svg class="a" style="left:237px;top:381px;color:#1c2b25" width="10" height="10" viewBox="0 0 24 24"><path d="M12 2 A10 10 0 1 1 6 20 L2 21.5 L3.8 17.5 A10 10 0 0 1 12 2Z" fill="currentColor"/></svg>
<svg class="a" style="left:250px;top:381px;color:#1c2b25" width="10" height="10" viewBox="0 0 24 24"><circle cx="10" cy="7" r="5" fill="currentColor"/><path d="M1 22 C1 16 5 13.5 10 13.5 C13 13.5 15 14.5 16 15.5 V22Z" fill="currentColor"/><path d="M19 12 V22 M14 17 H24" stroke="currentColor" stroke-width="2.6"/></svg>
<div class="a" style="left:81px;top:411.0px;width:15px;height:15px;border-radius:50%;overflow:hidden;background:radial-gradient(circle,#e8e8e8 0 55%,#fff 56% 100%);box-shadow:inset 0 0 0 1px #3aa84a;"></div><span class="t" id="t107" style="left:101px;top:412px;font-size:9.5px;line-height:13px;color:rgba(25,50,70,.78);font-weight:500;transform:scaleX(0.8778);transform-origin:left center;">01［lshw］ShabeleA</span>
<div class="a" style="left:81px;top:431.0px;width:15px;height:15px;border-radius:50%;overflow:hidden;background:repeating-radial-gradient(circle,#fff 0 1.5px,#c8a8b8 1.5px 3px);"></div><span class="t" id="t108" style="left:101px;top:432px;font-size:9.5px;line-height:13px;color:rgba(25,50,70,.78);font-weight:500;transform:scaleX(0.8571);transform-origin:left center;">8313</span><svg class="a" style="left:123px;top:433.0px;color:#b06bf0" width="11" height="11"><use href="#i-webm"/></svg><span class="t" id="t109" style="left:134.5px;top:433.8px;font-size:7px;line-height:10px;color:#1c2b35;font-weight:700;transform:scaleX(0.9545);transform-origin:left center;">WEBM</span><svg class="a" style="left:237px;top:433.5px;color:rgba(25,50,70,.78)" width="10" height="10"><use href="#i-micoff"/></svg><svg class="a" style="left:249px;top:434.0px" width="11" height="9" viewBox="0 0 11 9"><rect x="0.5" y="1" width="7" height="7" rx="1.5" fill="#1c2b25"/><path d="M7.5 3.5 L10.5 1.5 V7.5 L7.5 5.5Z" fill="#1c2b25"/></svg>
<div class="a" style="left:81px;top:451.0px;width:15px;height:15px;border-radius:50%;overflow:hidden;background:repeating-linear-gradient(135deg,#111 0 2.5px,#666 2.5px 4px);"></div><span class="t" id="t110" style="left:101px;top:452px;font-size:9.5px;line-height:13px;color:rgba(25,50,70,.78);font-weight:500;transform:scaleX(1.0000);transform-origin:left center;">t</span>
<div class="a" style="left:81px;top:471.0px;width:15px;height:15px;border-radius:50%;overflow:hidden;background:#ececec;"><svg class="a" style="left:0;top:0;overflow:hidden" width="15" height="15" viewBox="0 0 50 50"><defs><clipPath id="av2"><circle cx="25" cy="25" r="25"/></clipPath></defs><g clip-path="url(#av2)"><rect width="50" height="50" fill="#ececec"/>
<path d="M0 50 V36 C6 33 12 31 17 30 L25 38 L33 30 C38 31 45 33 50 36 V50Z" fill="#161616"/>
<path d="M13 30 C10 22 12 8 20 4 C26 1 34 4 36 10 C39 18 39 26 36 31 C33 34 30 30 25 36 C21 30 16 34 13 30Z" fill="#2a2a2a"/>
<ellipse cx="24.5" cy="19" rx="5.8" ry="8" fill="#c4c4c4"/>
<path d="M19 22 C20 29 29 29 30 22 C28 25 21 25 19 22Z" fill="#555"/>
<path d="M19.5 14.5 H23 M26 14.5 H29.5" stroke="#222" stroke-width="1"/>
<path d="M4 22 C8 20 9 26 12 25 M38 14 C42 16 44 12 47 16 M39 24 C43 23 44 28 48 27" stroke="#999" stroke-width="1.2" fill="none"/>
<path d="M25 36 L22 50 M25 36 L29 50" stroke="#444" stroke-width="0.8"/></g></svg></div><span class="t" id="t111" style="left:101px;top:472px;font-size:9.5px;line-height:13px;color:rgba(25,50,70,.78);font-weight:500;transform:scaleX(0.8462);transform-origin:left center;">Zàkø_Sà</span><svg class="a" style="left:138px;top:473.0px;color:#b06bf0" width="11" height="11"><use href="#i-webm"/></svg><span class="t" id="t112" style="left:149.5px;top:473.8px;font-size:7px;line-height:10px;color:#1c2b35;font-weight:700;transform:scaleX(0.9545);transform-origin:left center;">WEBM</span><svg class="a" style="left:250px;top:473.5px;color:rgba(25,50,70,.78)" width="10" height="10"><use href="#i-micoff"/></svg>
<div class="a" style="left:81px;top:491.0px;width:15px;height:15px;border-radius:50%;overflow:hidden;background:#f4f0ee;"><svg class="a" style="left:0;top:0;overflow:hidden" width="15" height="15" viewBox="0 0 50 50"><defs><clipPath id="av3"><circle cx="25" cy="25" r="25"/></clipPath></defs><g clip-path="url(#av3)"><rect width="50" height="50" fill="#f6f4f2"/>
<rect x="0" y="0" width="27" height="30" fill="#1a1a1a"/>
<rect x="0" y="19" width="27" height="7" fill="#3ab83a"/>
<path d="M14 30 L22 2 H28 L20 30Z" fill="#e86838"/>
<path d="M4 27 C12 22 30 22 46 26 C46 31 30 29 6 32Z" fill="#c01818"/>
<rect x="27" y="0" width="23" height="25" fill="#f4f4f4"/>
<path d="M38 5 L46 9.5 V18.5 L38 23 L30 18.5 V9.5Z" fill="none" stroke="#2468c0" stroke-width="3.2"/>
<path d="M40 11 A4 4 0 1 0 40 17" fill="none" stroke="#2468c0" stroke-width="2"/>
<rect x="0" y="31" width="13" height="8" fill="#c89068"/>
<circle cx="22" cy="42" r="3.6" fill="#d82020"/>
<path d="M31 37 h5 v4 h-5z" fill="#3878c8"/><path d="M34 41 h5 v4 h-5z" fill="#f0c828"/>
<rect x="28" y="31" width="9" height="6" fill="#e888c8"/><rect x="32" y="31" width="5" height="6" fill="#f0a028"/>
<circle cx="43" cy="35" r="3.5" fill="#a8a8a0"/>
<path d="M40 45 A5 5 0 0 1 47 41" stroke="#38b848" stroke-width="2.2" fill="none"/></g></svg></div><span class="t" id="t113" style="left:101px;top:492px;font-size:9.5px;line-height:13px;color:rgba(25,50,70,.78);font-weight:500;transform:scaleX(0.9051);transform-origin:left center;">あるふぁ@Monokai&amp;AtCoder&amp;茶軸...</span><svg class="a" style="left:250px;top:493.5px;color:rgba(25,50,70,.78)" width="10" height="10"><use href="#i-micoff"/></svg>
<div class="a" style="left:81px;top:511.5px;width:15px;height:15px;border-radius:50%;overflow:hidden;background:radial-gradient(circle at 50% 60%,#f8e0d0 0 35%,#58c8a8 50%,#e8f8f0 100%);"></div><span class="t" id="t114" style="left:101px;top:512.5px;font-size:9.5px;line-height:13px;color:rgba(25,50,70,.78);font-weight:500;transform:scaleX(0.9467);transform-origin:left center;">こってりドーナツ</span><svg class="a" style="left:176px;top:513.5px;color:#b06bf0" width="11" height="11"><use href="#i-webm"/></svg><span class="t" id="t115" style="left:187.5px;top:514.3px;font-size:7px;line-height:10px;color:#1c2b35;font-weight:700;transform:scaleX(0.9545);transform-origin:left center;">WEBM</span><svg class="a" style="left:250px;top:514px;color:rgba(25,50,70,.78)" width="10" height="10"><use href="#i-micoff"/></svg>
<div class="a" style="left:7px;top:532px;width:258px;height:130px;background:linear-gradient(180deg,#ffffff 0,#fbfbff 36px,#e6e8ff 37px,#dcdcff 130px);border-radius:7px 7px 0 0;"></div>
<div class="a" style="left:15px;top:540px;width:20px;height:20px;background:linear-gradient(135deg,#2a7aa8,#103a5a);border-radius:4px;"><svg class="a" style="left:1.5px;top:2px" width="16" height="16" viewBox="0 0 16 16"><path d="M9.5 2.5 L3 8 L9.5 13.5 L9.5 10.6 L6.5 8 L9.5 5.4 Z" fill="#fff"/><circle cx="11" cy="8" r="1.8" fill="#fff"/></svg></div>
<span class="t" id="t116" style="left:40px;top:543.5px;font-size:9.5px;line-height:13px;color:#2a2d3a;font-weight:500;transform:scaleX(0.9697);transform-origin:left center;">Cubase</span>
<svg class="a" style="left:242px;top:545px" width="11" height="10" viewBox="0 0 22 20"><rect x="1" y="1" width="20" height="13" rx="2.5" fill="#1a1d2a"/><path d="M8 18.5 H14 M11 14 V18" stroke="#1a1d2a" stroke-width="2.4"/><path d="M6.5 10.5 C7 7.5 9 6.2 12 6.2 V3.8 L16 7.2 L12 10.6 V8.4 C9.5 8.4 8 9 6.5 10.5Z" fill="#fff"/></svg>
<div class="a" style="left:16px;top:577px;width:20px;height:20px;background:rgba(225,232,240,.8);border-radius:4px;"><svg class="a" style="left:5px;top:5px" width="10" height="10" viewBox="0 0 10 10" fill="none" stroke="#2aa84a" stroke-width="1.4"><path d="M1 9 A0.3 0.3 0 0 1 1 8.4 M1 5.5 A3.5 3.5 0 0 1 4.5 9 M1 2.8 A6.2 6.2 0 0 1 7.2 9 M1 0.5 A8.5 8.5 0 0 1 9.5 9"/></svg></div>
<span class="t" id="t117" style="left:41px;top:574.5px;font-size:10px;line-height:14px;color:#287a48;font-weight:500;transform:scaleX(0.9857);transform-origin:left center;">ビデオ接続完了</span>
<div class="a" style="left:42px;top:590px;width:3px;height:5px;background:#58b048;"></div><div class="a" style="left:45px;top:589px;width:3px;height:6px;background:#e8a028;"></div><div class="a" style="left:47px;top:591px;width:3px;height:4px;background:#4868d8;"></div>
<div class="a" style="left:54px;top:589.5px;width:1px;height:8px;background:#3a3d4a;"></div>
<span class="t" id="t118" style="left:58px;top:588px;font-size:8px;line-height:11px;color:#3a3d4a;font-weight:500;transform:scaleX(0.9533);transform-origin:left center;">VC作業（雑談あり）/ ウェブマニア公式...</span>
<svg class="a" style="left:217px;top:581px" width="13" height="12" viewBox="0 0 13 12" stroke="#2a2d3a" fill="none" stroke-width="1.1"><path d="M2 5 V8 M4.2 3 V9.5 M6.4 4 V8.5 M8.6 5.5 V8 M10.8 5 V7.5 M1 11.5 L12 0.5"/></svg>
<svg class="a" style="left:239px;top:583px" width="13" height="7" viewBox="0 0 13 7"><path d="M0.8 5.5 C0.5 2.5 3.5 0.8 6.5 0.8 C9.5 0.8 12.5 2.5 12.2 5.5 L9.5 6 L9 3.8 C7.5 3.2 5.5 3.2 4 3.8 L3.5 6Z" fill="#1a1d2a"/></svg>
<div class="a" style="left:16px;top:605px;width:75.5px;height:19.5px;background:#8c9eff;border-radius:5px;box-shadow:inset 0 -1px 0 rgba(60,70,200,.2);"></div>
<div class="a" style="left:98px;top:605px;width:75.5px;height:19.5px;background:#8c9eff;border-radius:5px;box-shadow:inset 0 -1px 0 rgba(60,70,200,.2);"></div>
<div class="a" style="left:180px;top:605px;width:75.5px;height:19.5px;background:#8c9eff;border-radius:5px;box-shadow:inset 0 -1px 0 rgba(60,70,200,.2);"></div>
<svg class="a" style="left:47px;top:609px" width="13" height="12" viewBox="0 0 13 12"><rect x="1" y="2.5" width="8" height="7" rx="1.5" fill="#1a1d2a"/><path d="M9 5 L12 3 V9 L9 7Z" fill="#1a1d2a"/><path d="M1 11.5 L11.5 0.5" stroke="#8c9eff" stroke-width="2.2"/><path d="M1.5 11 L11 1" stroke="#1a1d2a" stroke-width="1.1"/></svg>
<svg class="a" style="left:130px;top:609.5px" width="11" height="10" viewBox="0 0 22 20"><rect x="1" y="1" width="20" height="13" rx="2.5" fill="#1a1d2a"/><path d="M8 18.5 H14 M11 14 V18" stroke="#1a1d2a" stroke-width="2.4"/><path d="M6.5 10.5 C7 7.5 9 6.2 12 6.2 V3.8 L16 7.2 L12 10.6 V8.4 C9.5 8.4 8 9 6.5 10.5Z" fill="#fff"/></svg>
<svg class="a" style="left:212px;top:609.5px;color:#1a1d2a" width="11" height="11"><use href="#i-pad"/></svg>
<div class="a" style="left:15px;top:634px;width:243px;height:1px;background:rgba(120,120,200,.18);"></div>
<div class="a" style="left:17px;top:639px;width:18px;height:18px;background:radial-gradient(circle,#f4f8e8 0 40%,#c8e0b0 70%,#e8f0e0 100%);border-radius:50%;"></div>
<span class="t" id="t119" style="left:40px;top:638.5px;font-size:9.5px;line-height:13px;color:#2a2d3a;font-weight:700;">ゆ</span>
<div class="a" style="left:186px;top:641px;width:21px;height:16px;background:rgba(250,180,190,.55);border-radius:4px;"></div>
<div class="a" style="left:194px;top:645px;width:5px;height:7px;background:#e84858;border-radius:3px;"></div>
<div class="a" style="left:216px;top:644.5px;width:9px;height:9px;border:1.3px solid #2a2d3a;border-radius:50%;"></div>
<div class="a" style="left:241px;top:645px;width:9px;height:9px;background:#2a2d3a;border-radius:50%;"></div>
<div class="a" style="left:271px;top:20px;width:443px;height:640px;background:#000;border-radius:0 7px 0 0;"></div>
<div class="a" style="left:277px;top:138px;width:140.5px;height:78.5px;background:#232a5a;border-radius:5px;overflow:hidden;"><svg class="a" style="left:0;top:0" width="141" height="79" viewBox="0 0 141 79"><defs><linearGradient id="obsg" x1="0" y1="0" x2="0.15" y2="1"><stop offset="0" stop-color="#242c66"/><stop offset="0.55" stop-color="#27327c"/><stop offset="1" stop-color="#2a388e"/></linearGradient></defs><path d="M0 9 L141 45.3 L0 64.4Z" fill="url(#obsg)"/><path d="M0 64.4 L141 45.3 V79 H0Z" fill="#1c1c36"/></svg></div>
<div class="a" style="left:329.5px;top:147.5px;width:36px;height:36px;background:#1c1b1f;border-radius:50%;box-shadow:inset 0 0 0 1.4px #fff;"><svg class="a" style="left:0;top:0" width="36" height="36" viewBox="0 0 36 36" fill="none" stroke="#ececec" stroke-width="2.3" stroke-linecap="round"><path d="M11.5 7.5 C10.5 12.5 13.5 17 18.5 18.5"/><path d="M30 15.5 C26 11.5 20.5 13 18.5 18.5"/><path d="M13.5 29.5 C18.5 29 21.5 24 18.5 18.5"/></svg></div>
<svg class="a" style="left:341px;top:195px" width="13" height="12" viewBox="0 0 13 12"><rect x="1" y="3" width="8" height="6.5" rx="1" fill="#8890ac"/><path d="M9 5.5 L12 3.5 V9 L9 7Z" fill="#8890ac"/><path d="M1 0.8 L11.5 11.2" stroke="#1e2048" stroke-width="2.2"/><path d="M1 0.8 L11.5 11.2" stroke="#8890ac" stroke-width="1"/></svg>
<div class="a" style="left:282px;top:191.5px;width:20px;height:20px;background:rgba(10,12,40,.6);border-radius:5px;"></div><svg class="a" style="left:287px;top:196.5px;color:#fff" width="10" height="10"><use href="#i-micoff"/></svg>
<div class="a" style="left:423px;top:138px;width:140.5px;height:78.5px;background:#e2e4e6;border-radius:5px;overflow:hidden;box-shadow:inset 0 0 0 1.5px #3f9656,inset 0 0 0 2.5px #f4f8f4;"></div><div class="a" style="left:468.25px;top:152.25px;width:50px;height:50px;border-radius:50%;overflow:hidden;background:#fff;"><svg class="a" style="left:0;top:0" width="50" height="50" viewBox="0 0 50 50" fill="none" stroke="#b4b4b4" stroke-width="0.7"><ellipse cx="25" cy="19" rx="9" ry="6"/><ellipse cx="19" cy="22" rx="8" ry="5" transform="rotate(-20 19 22)"/><ellipse cx="31" cy="22" rx="8" ry="5" transform="rotate(20 31 22)"/><ellipse cx="25" cy="23" rx="6" ry="7"/><ellipse cx="15" cy="31" rx="9" ry="3" transform="rotate(12 15 31)" fill="#d8d8d8"/><ellipse cx="35" cy="31" rx="9" ry="3" transform="rotate(-12 35 31)" fill="#d8d8d8"/><path d="M25 28 V40 M21 34 C23 36 27 36 29 34"/></svg><span class="t" id="t120" style="left:11px;top:21px;font-size:5.5px;line-height:8px;color:#333;font-weight:700;">SHABELEA</span></div>
<div class="a" style="left:568px;top:138px;width:140.5px;height:78.5px;background:#8c8c8c;border-radius:5px;overflow:hidden;"></div><div class="a" style="left:613.25px;top:152.25px;width:50px;height:50px;border-radius:50%;overflow:hidden;background:#141414;"><svg class="a" style="left:0;top:0" width="50" height="50" viewBox="0 0 50 50"><defs><pattern id="pdots" width="3" height="3" patternUnits="userSpaceOnUse"><circle cx="1.5" cy="1.5" r="1.05" fill="#fff"/></pattern><pattern id="pdots2" width="3" height="3" patternUnits="userSpaceOnUse"><circle cx="1.5" cy="1.5" r="1" fill="#2c2c2c"/></pattern><mask id="pmask"><path d="M8 28 L35.5 5.5 M12 44.5 L45.5 17 M14 5.5 L20.5 12 M33.5 37 L41 44.5" stroke="#fff" stroke-width="6.2"/></mask></defs><rect width="50" height="50" fill="url(#pdots2)"/><rect width="50" height="50" fill="url(#pdots)" mask="url(#pmask)"/></svg></div>
<div class="a" style="left:277px;top:222px;width:140.5px;height:78.5px;background:#222222;border-radius:5px;overflow:hidden;"></div><div class="a" style="left:322.25px;top:236.25px;width:50px;height:50px;border-radius:50%;overflow:hidden;background:#ececec;"><svg class="a" style="left:0;top:0;overflow:hidden" width="50" height="50" viewBox="0 0 50 50"><defs><clipPath id="av4"><circle cx="25" cy="25" r="25"/></clipPath></defs><g clip-path="url(#av4)"><rect width="50" height="50" fill="#ececec"/>
<path d="M0 50 V36 C6 33 12 31 17 30 L25 38 L33 30 C38 31 45 33 50 36 V50Z" fill="#161616"/>
<path d="M13 30 C10 22 12 8 20 4 C26 1 34 4 36 10 C39 18 39 26 36 31 C33 34 30 30 25 36 C21 30 16 34 13 30Z" fill="#2a2a2a"/>
<ellipse cx="24.5" cy="19" rx="5.8" ry="8" fill="#c4c4c4"/>
<path d="M19 22 C20 29 29 29 30 22 C28 25 21 25 19 22Z" fill="#555"/>
<path d="M19.5 14.5 H23 M26 14.5 H29.5" stroke="#222" stroke-width="1"/>
<path d="M4 22 C8 20 9 26 12 25 M38 14 C42 16 44 12 47 16 M39 24 C43 23 44 28 48 27" stroke="#999" stroke-width="1.2" fill="none"/>
<path d="M25 36 L22 50 M25 36 L29 50" stroke="#444" stroke-width="0.8"/></g></svg></div><div class="a" style="left:282px;top:275.5px;width:20px;height:20px;background:rgba(0,0,0,.5);border-radius:5px;"></div><svg class="a" style="left:287px;top:280.5px;color:#fff" width="10" height="10"><use href="#i-micoff"/></svg>
<div class="a" style="left:423px;top:222px;width:140.5px;height:78.5px;background:#e2d4c8;border-radius:5px;overflow:hidden;"></div><div class="a" style="left:468.25px;top:236.25px;width:50px;height:50px;border-radius:50%;overflow:hidden;background:#f6f4f2;box-shadow:0 0 0 1.2px #e2d4c8,0 0 0 2px rgba(208,56,56,.9),0 0 0 3px #e2d4c8,0 0 0 3.6px rgba(208,56,56,.7);"><svg class="a" style="left:0;top:0;overflow:hidden" width="50" height="50" viewBox="0 0 50 50"><defs><clipPath id="av5"><circle cx="25" cy="25" r="25"/></clipPath></defs><g clip-path="url(#av5)"><rect width="50" height="50" fill="#f6f4f2"/>
<rect x="0" y="0" width="27" height="30" fill="#1a1a1a"/>
<rect x="0" y="19" width="27" height="7" fill="#3ab83a"/>
<path d="M14 30 L22 2 H28 L20 30Z" fill="#e86838"/>
<path d="M4 27 C12 22 30 22 46 26 C46 31 30 29 6 32Z" fill="#c01818"/>
<rect x="27" y="0" width="23" height="25" fill="#f4f4f4"/>
<path d="M38 5 L46 9.5 V18.5 L38 23 L30 18.5 V9.5Z" fill="none" stroke="#2468c0" stroke-width="3.2"/>
<path d="M40 11 A4 4 0 1 0 40 17" fill="none" stroke="#2468c0" stroke-width="2"/>
<rect x="0" y="31" width="13" height="8" fill="#c89068"/>
<circle cx="22" cy="42" r="3.6" fill="#d82020"/>
<path d="M31 37 h5 v4 h-5z" fill="#3878c8"/><path d="M34 41 h5 v4 h-5z" fill="#f0c828"/>
<rect x="28" y="31" width="9" height="6" fill="#e888c8"/><rect x="32" y="31" width="5" height="6" fill="#f0a028"/>
<circle cx="43" cy="35" r="3.5" fill="#a8a8a0"/>
<path d="M40 45 A5 5 0 0 1 47 41" stroke="#38b848" stroke-width="2.2" fill="none"/></g></svg></div><div class="a" style="left:428px;top:275.5px;width:20px;height:20px;background:rgba(60,50,45,.6);border-radius:5px;"></div><svg class="a" style="left:433px;top:280.5px;color:#fff" width="10" height="10"><use href="#i-micoff"/></svg>
<div class="a" style="left:506.25px;top:228px;width:12px;height:12px;"><svg class="a" style="left:0;top:0" width="12" height="12" viewBox="0 0 12 12" fill="none" stroke="#c01818" stroke-width="1.6" stroke-linecap="round"><path d="M2 3 C4 3 5 4 5 5.5 M7 1.5 C7 3 8 4 10 4 M10.5 7 C9 7 8 8 8 9.5 M5 10.5 C5 9 4 8 2.5 8"/></svg></div>
<div class="a" style="left:467.25px;top:273.25px;width:13px;height:13px;background:#fff;border-radius:50%;box-shadow:0 0 0 1.2px #111;"></div>
<div class="a" style="left:472.95000000000005px;top:275.75px;width:1.8px;height:5px;background:#111;border-radius:1px;"></div>
<div class="a" style="left:472.95000000000005px;top:282.25px;width:1.8px;height:1.8px;background:#111;border-radius:50%;"></div>
<div class="a" style="left:568px;top:222px;width:140.5px;height:78.5px;background:#58b8d8;border-radius:5px;overflow:hidden;"></div><div class="a" style="left:613.25px;top:236.25px;width:50px;height:50px;border-radius:50%;overflow:hidden;background:transparent;overflow:visible;"><svg class="a" style="left:0;top:0;overflow:visible" width="50" height="50" viewBox="0 0 50 50"><defs><clipPath id="av6"><circle cx="25" cy="25" r="25"/></clipPath></defs><path d="M4 26 C4 2 46 2 46 26" fill="none" stroke="#14246c" stroke-width="3.2"/>
<path d="M17 6.5 H33" stroke="#c8d838" stroke-width="1.4"/>
<rect x="-1.5" y="18" width="8.5" height="20" rx="4" fill="#14246c"/><rect x="43" y="18" width="8.5" height="20" rx="4" fill="#14246c"/>
<path d="M1 22 V34 M49 22 V34" stroke="#4868c8" stroke-width="1.2"/>
<ellipse cx="12" cy="16" rx="5.5" ry="4" fill="#58882c" transform="rotate(-30 12 16)"/><ellipse cx="38" cy="16" rx="5.5" ry="4" fill="#58882c" transform="rotate(30 38 16)"/>
<path d="M8 30 C6 16 16 11 25 11 C34 11 44 16 42 30 C42 38 40 42 38 45 L36 38 C30 40 20 40 14 38 L12 46 C9 42 8 36 8 30Z" fill="#dcdff0"/>
<path d="M15 28 C15 24 35 24 35 28 C36 38 31 44 25 44 C19 44 14 38 15 28Z" fill="#e2d6bc"/>
<path d="M12 30 C14 22 20 19 25 24 C30 19 36 22 38 30 L34 26 L31 30 L27 25 L23 30 L19 26 L15 31Z" fill="#e4e7f4"/>
<ellipse cx="19.5" cy="31" rx="2" ry="2.4" fill="#2a3470"/><ellipse cx="30.5" cy="31" rx="2" ry="2.4" fill="#2a3470"/>
<path d="M23.5 38.5 H26.5" stroke="#a06858" stroke-width="1"/></svg></div><div class="a" style="left:573px;top:275.5px;width:20px;height:20px;background:rgba(20,60,75,.6);border-radius:5px;"></div><svg class="a" style="left:578px;top:280.5px;color:#fff" width="10" height="10"><use href="#i-micoff"/></svg>
<div class="a" style="left:277px;top:306px;width:140.5px;height:78.5px;background:#d2d8d2;border-radius:5px;overflow:hidden;"></div><div class="a" style="left:322.25px;top:320.25px;width:50px;height:50px;border-radius:50%;overflow:hidden;background:#eef0e4;"><svg class="a" style="left:0;top:0;overflow:hidden" width="50" height="50" viewBox="0 0 50 50"><defs><clipPath id="av7"><circle cx="25" cy="25" r="25"/></clipPath></defs><g clip-path="url(#av7)"><rect width="50" height="50" fill="#eef0e4"/>
<path d="M30 0 L50 0 V22 L36 10Z" fill="#f0e8b4"/>
<path d="M0 6 L14 0 L6 30 L0 34Z" fill="#f8f8f4"/>
<path d="M6 30 C4 12 14 4 25 4 C36 4 46 12 44 30 C44 38 42 44 40 48 L10 48 C8 44 6 38 6 30Z" fill="#a6dcc6"/>
<path d="M21 2 L24 12 L27 2 L30 8 L27 14 H23 L20 8Z" fill="#1e3a30"/>
<path d="M13 28 C13 20 37 20 37 28 C38 38 31 42 25 42 C19 42 12 38 13 28Z" fill="#fbeee8"/>
<path d="M10 30 C12 18 22 14 25 22 C28 14 38 18 40 30 L36 24 L32 29 L25 22 L18 29 L14 24Z" fill="#b4e6d0"/>
<ellipse cx="19" cy="30" rx="2.6" ry="3.2" fill="#28805a"/><ellipse cx="31" cy="30" rx="2.6" ry="3.2" fill="#28805a"/>
<ellipse cx="15.5" cy="35" rx="2.5" ry="1.4" fill="#f8b8b8"/><ellipse cx="34.5" cy="35" rx="2.5" ry="1.4" fill="#f8b8b8"/>
<path d="M12 50 C12 42 18 40 25 42 C32 40 38 42 38 50Z" fill="#245a40"/>
<path d="M22 43 L25 47 L28 43Z" fill="#c03838"/>
<path d="M2 34 C6 38 4 44 8 48" stroke="#b8c0b8" stroke-width="1" fill="none"/></g></svg></div><div class="a" style="left:282px;top:359.5px;width:20px;height:20px;background:rgba(70,75,70,.65);border-radius:5px;"></div><svg class="a" style="left:287px;top:364.5px;color:#fff" width="10" height="10"><use href="#i-micoff"/></svg>
<div class="a" style="left:423px;top:306px;width:140.5px;height:78.5px;background:#e8ecc4;border-radius:5px;overflow:hidden;"></div><div class="a" style="left:468.25px;top:320.25px;width:50px;height:50px;border-radius:50%;overflow:hidden;background:#fff;"><svg class="a" style="left:0;top:0;overflow:hidden" width="50" height="50" viewBox="0 0 50 50"><defs><clipPath id="av8"><circle cx="25" cy="25" r="25"/></clipPath></defs><g clip-path="url(#av8)"><rect width="50" height="50" fill="#f6f6fc"/>
<circle cx="25" cy="25" r="24" fill="none" stroke="#c4cef4" stroke-width="3" stroke-dasharray="2 3"/>
<circle cx="25" cy="25" r="21" fill="none" stroke="#dfe4fa" stroke-width="3" stroke-dasharray="3 2"/>
<circle cx="25" cy="26" r="18" fill="#ffffff"/>
<path d="M9 29 C8 22 12 17 17 17 L17 34 C13 35 10 33 9 29Z" fill="#181818"/>
<path d="M12 28 C12 20 38 20 38 28 C38 37 32 41 25 41 C18 41 12 37 12 28Z" fill="#fbe0c0" stroke="#3a2a20" stroke-width="0.8"/>
<path d="M10 22 C10 10 20 7 26 7 C34 7 40 12 40 20 L42 22 C42 24 40 24 38 24 L12 24 C10 24 10 23 10 22Z" fill="#9ce086" stroke="#35602c" stroke-width="1"/>
<path d="M14 21 C20 19 32 19 38 21" stroke="#35602c" stroke-width="0.8" fill="none"/>
<path d="M18 26 C19 25 21 25 22 26 M28 26 C29 25 31 25 32 26" stroke="#181818" stroke-width="1.2" fill="none"/>
<path d="M20 34 C23 37 28 36 31 33" stroke="#3a2a20" stroke-width="1" fill="none"/></g></svg></div><div class="a" style="left:428px;top:359.5px;width:20px;height:20px;background:rgba(80,85,65,.65);border-radius:5px;"></div><svg class="a" style="left:433px;top:364.5px;color:#fff" width="10" height="10"><use href="#i-micoff"/></svg>
<div class="a" style="left:568px;top:306px;width:140.5px;height:78.5px;background:#eee4d6;border-radius:5px;overflow:hidden;"></div><div class="a" style="left:613.25px;top:320.25px;width:50px;height:50px;border-radius:50%;overflow:hidden;background:#fff;"><svg class="a" style="left:0;top:0;overflow:hidden" width="50" height="50" viewBox="0 0 50 50"><defs><clipPath id="av9"><circle cx="25" cy="25" r="25"/></clipPath></defs><g clip-path="url(#av9)"><rect width="50" height="50" fill="#ffffff"/>
<path d="M5 26 C4 18 12 10 24 10 C36 10 44 16 44 24 C46 24 49 25 48 28 C47 32 42 32 40 33 C34 37 14 37 8 32 C6 30 5 28 5 26Z" fill="#fff" stroke="#3a3a3a" stroke-width="0.9"/>
<path d="M5 25 C4 16 12 10 24 10 C36 10 44 16 44 25 L41 21 L38 27 L34 20 L30 27 L25 19 L21 27 L17 20 L13 26 L9 21Z" fill="#70747a"/>
<path d="M13 29 C15 26 19 26 21 29 M29 29 C31 26 35 26 37 29" stroke="#333" stroke-width="1" fill="none"/>
<path d="M22 32 C24 34 27 34 29 32" stroke="#333" stroke-width="1" fill="none"/>
<text x="24.5" y="46" font-size="7.6" text-anchor="middle" fill="#222" font-family="Liberation Sans,Noto Sans CJK JP,sans-serif">つゆさらす</text></g></svg></div><div class="a" style="left:573px;top:359.5px;width:20px;height:20px;background:rgba(85,80,70,.65);border-radius:5px;"></div><svg class="a" style="left:578px;top:364.5px;color:#fff" width="10" height="10"><use href="#i-micoff"/></svg>
<div class="a" style="left:277px;top:390px;width:140.5px;height:78.5px;background:#f0b0c4;border-radius:5px;overflow:hidden;"></div><div class="a" style="left:322.25px;top:404.25px;width:50px;height:50px;border-radius:50%;overflow:hidden;background:transparent;overflow:visible;"><svg class="a" style="left:0;top:0;overflow:visible" width="50" height="50" viewBox="0 0 50 50"><defs><clipPath id="av10"><circle cx="25" cy="25" r="25"/></clipPath></defs><circle cx="25" cy="25" r="22" fill="#f0507c"/><path d="M25 25 L54.0 25.0 L53.6 29.5Z" fill="#fbe0e8" opacity=".8"/><path d="M25 25 L50.1 39.5 L47.5 43.3Z" fill="#fbe0e8" opacity=".8"/><path d="M25 25 L39.5 50.1 L35.4 52.1Z" fill="#fbe0e8" opacity=".8"/><path d="M25 25 L25.0 54.0 L20.5 53.6Z" fill="#fbe0e8" opacity=".8"/><path d="M25 25 L10.5 50.1 L6.7 47.5Z" fill="#fbe0e8" opacity=".8"/><path d="M25 25 L-0.1 39.5 L-2.1 35.4Z" fill="#fbe0e8" opacity=".8"/><path d="M25 25 L-4.0 25.0 L-3.6 20.5Z" fill="#fbe0e8" opacity=".8"/><path d="M25 25 L-0.1 10.5 L2.5 6.7Z" fill="#fbe0e8" opacity=".8"/><path d="M25 25 L10.5 -0.1 L14.6 -2.1Z" fill="#fbe0e8" opacity=".8"/><path d="M25 25 L25.0 -4.0 L29.5 -3.6Z" fill="#fbe0e8" opacity=".8"/><path d="M25 25 L39.5 -0.1 L43.3 2.5Z" fill="#fbe0e8" opacity=".8"/><path d="M25 25 L50.1 10.5 L52.1 14.6Z" fill="#fbe0e8" opacity=".8"/>
<circle cx="25" cy="25" r="22" fill="none" stroke="#f0b0c4" stroke-width="1"/>
<path d="M8 50 C8 38 16 35 25 36 C34 35 42 38 42 50Z" fill="#f6f6fa" stroke="#2a2a4a" stroke-width="0.8"/>
<path d="M19 37 L25 50 L31 37 C28 40 22 40 19 37Z" fill="#e85848"/>
<path d="M10 44 L18 37 L20 46Z M40 44 L32 37 L30 46Z" fill="#2a2a58"/>
<path d="M15 24 C15 14 35 14 35 24 C36 33 30 39 25 39 C20 39 14 33 15 24Z" fill="#fbe2cc" stroke="#5a3020" stroke-width="0.6"/>
<path d="M11 26 C8 12 18 5 26 6 C36 5 42 14 39 26 L36 20 L33 25 L28 17 L24 25 L20 18 L16 25 L13 21Z" fill="#563a9c" stroke="#2a1a5a" stroke-width="0.6"/>
<path d="M24 4 L27 10 L30 5Z" fill="#563a9c"/>
<ellipse cx="20.5" cy="27" rx="1.6" ry="2" fill="#3a2a6a"/><ellipse cx="29.5" cy="27" rx="1.6" ry="2" fill="#3a2a6a"/>
<path d="M22 33 C24 34.5 26 34.5 28 33" stroke="#7a4030" stroke-width="0.8" fill="none"/>
<path d="M11 1.5 L12.54 5.46 L16.5 7 L12.54 8.54 L11 12.5 L9.46 8.54 L5.5 7 L9.46 5.46Z" fill="#fae04a" stroke="#5a3a18" stroke-width="0.6"/><path d="M37 4.5 L38.26 7.74 L41.5 9 L38.26 10.26 L37 13.5 L35.74 10.26 L32.5 9 L35.74 7.74Z" fill="#fae04a" stroke="#5a3a18" stroke-width="0.6"/><path d="M44 12 L45.4 15.6 L49 17 L45.4 18.4 L44 22 L42.6 18.4 L39 17 L42.6 15.6Z" fill="#fae04a" stroke="#5a3a18" stroke-width="0.6"/><path d="M47 28.5 L47.98 31.02 L50.5 32 L47.98 32.98 L47 35.5 L46.02 32.98 L43.5 32 L46.02 31.02Z" fill="#fae04a" stroke="#5a3a18" stroke-width="0.6"/><path d="M10 36.5 L11.54 40.46 L15.5 42 L11.54 43.54 L10 47.5 L8.46 43.54 L4.5 42 L8.46 40.46Z" fill="#fae04a" stroke="#5a3a18" stroke-width="0.6"/><path d="M6 17 L6.84 19.16 L9 20 L6.84 20.84 L6 23 L5.16 20.84 L3 20 L5.16 19.16Z" fill="#fae04a" stroke="#5a3a18" stroke-width="0.6"/></svg></div><div class="a" style="left:282px;top:443.5px;width:20px;height:20px;background:rgba(90,60,70,.65);border-radius:5px;"></div><svg class="a" style="left:287px;top:448.5px;color:#fff" width="10" height="10"><use href="#i-micoff"/></svg>
<div class="a" style="left:423px;top:390px;width:140.5px;height:78.5px;background:#6cc42c;border-radius:5px;overflow:hidden;"></div><div class="a" style="left:468.25px;top:404.25px;width:50px;height:50px;border-radius:50%;overflow:hidden;background:#6cc42c;"><svg class="a" style="left:0;top:0;overflow:hidden" width="50" height="50" viewBox="0 0 50 50"><defs><clipPath id="av11"><circle cx="25" cy="25" r="25"/></clipPath></defs><g clip-path="url(#av11)"><rect width="50" height="26" fill="#9cea50"/><rect y="26" width="50" height="24" fill="#4cb424"/>
<path d="M25 26 H50 V50 H30Z" fill="#42a41e"/>
<circle cx="25" cy="25" r="24.5" fill="none" stroke="#b4f470" stroke-width="1" opacity=".6"/>
<g stroke="#0c4a50" stroke-width="1.4" stroke-linejoin="round" fill="#3cd4dc">
<path d="M37 8 C33.5 8.5 31.5 12 33 15 L13 33.5 C10 32 6.5 34 6.5 37.5 L10.5 35.5 L13.5 38.5 L11.5 42.5 C15 42.5 17 39 15.5 36 L35.5 17.5 C38.5 19 42 17 42.5 13.5 L38.5 15.5 L35.5 12.5Z"/>
<path d="M13.5 14.5 L17.5 10.5 L41.5 36.5 L37.5 40.5Z"/>
<path d="M7 17.5 C8 10 16 5.5 24 8.5 L21 12.5 C17.5 11.5 14.5 13 12.5 16.5 L10.5 20.5Z"/>
</g></g></svg></div><div class="a" style="left:428px;top:443.5px;width:20px;height:20px;background:rgba(30,70,10,.6);border-radius:5px;"></div><svg class="a" style="left:433px;top:448.5px;color:#fff" width="10" height="10"><use href="#i-micoff"/></svg>
<div class="a" style="left:568px;top:390px;width:140.5px;height:78.5px;background:#b0a094;border-radius:5px;overflow:hidden;"></div><div class="a" style="left:613.25px;top:404.25px;width:50px;height:50px;border-radius:50%;overflow:hidden;background:#e89838;"><svg class="a" style="left:0;top:0;overflow:hidden" width="50" height="50" viewBox="0 0 50 50"><defs><clipPath id="av12"><circle cx="25" cy="25" r="25"/></clipPath></defs><g clip-path="url(#av12)"><rect width="50" height="50" fill="#e89838"/>
<path d="M28 0 H50 V50 H36Z" fill="#f0d060"/>
<circle cx="44" cy="20" r="5" fill="#e86820"/><circle cx="40" cy="38" r="5" fill="#f4ecd0"/><circle cx="46" cy="30" r="4" fill="#d85818"/>
<path d="M0 0 H14 L6 22 H0Z" fill="#f07828"/>
<path d="M8 6 C16 -2 34 0 40 8 L30 12 C24 6 16 8 10 12Z" fill="#4c9ce0"/>
<path d="M14 8 C20 4 30 4 36 9" stroke="#8cc8f4" stroke-width="1.2" fill="none"/>
<path d="M13 26 C11 12 20 8 27 8 C35 8 43 13 40 28 L36 32 H16Z" fill="#5c3ca0"/>
<rect x="36" y="16" width="6" height="13" rx="3" fill="#3a3a44"/>
<path d="M16 26 C16 18 38 18 38 26 C38 34 32 38 27 38 C21 38 16 34 16 26Z" fill="#fce4d4"/>
<path d="M14 24 C16 14 26 12 28 20 C31 13 38 15 39 24 L34 20 L28 21 L22 20Z" fill="#6846ac"/>
<circle cx="22" cy="27" r="4" fill="#fff" stroke="#1e1e28" stroke-width="1.1"/><circle cx="33" cy="27" r="4" fill="#fff" stroke="#1e1e28" stroke-width="1.1"/>
<path d="M26 27 H29" stroke="#1e1e28" stroke-width="1"/>
<circle cx="22.5" cy="27.5" r="1.2" fill="#1e1e28"/><circle cx="32.5" cy="27.5" r="1.2" fill="#1e1e28"/>
<path d="M25 33 C27 34.5 29 34.5 30.5 33" stroke="#7a4030" stroke-width="0.8" fill="none"/>
<path d="M16 50 C16 40 22 37 28 38 C34 37 40 40 40 50Z" fill="#5a3a98"/>
<rect x="32" y="39" width="12" height="9" rx="1" fill="#a8b8dc" transform="rotate(-8 38 43)"/>
<path d="M-2 36 H22 L24 44 H26 V50 H-2Z" fill="#7e7a58"/>
<path d="M0 30 H10 L12 36 H-2Z" fill="#8e8a68"/>
<circle cx="4" cy="49" r="4" fill="#3a3a34"/><circle cx="16" cy="50" r="4" fill="#3a3a34"/><circle cx="28" cy="50" r="3.5" fill="#3a3a34"/>
<rect x="2" y="20" width="6" height="10" fill="#c8c0a8"/></g></svg></div><div class="a" style="left:573px;top:443.5px;width:20px;height:20px;background:rgba(70,60,55,.65);border-radius:5px;"></div><svg class="a" style="left:578px;top:448.5px;color:#fff" width="10" height="10"><use href="#i-micoff"/></svg>
<div class="a" style="left:423px;top:474px;width:140px;height:78.5px;background:#090a0e;border-radius:5px;"></div>
<svg class="a" style="left:481px;top:501px;color:#fff" width="24" height="24"><use href="#i-pad"/></svg>
<div class="a" style="left:485px;top:508px;width:5px;height:1.6px;background:#090a0e;"></div>
<div class="a" style="left:486.70000000000005px;top:506.29999999999995px;width:1.6px;height:5px;background:#090a0e;"></div>
<div class="a" style="left:495px;top:506px;width:2.4px;height:2.4px;background:#090a0e;border-radius:50%;"></div>
<div class="a" style="left:498px;top:509px;width:2.4px;height:2.4px;background:#090a0e;border-radius:50%;"></div>
<div class="a" style="left:546px;top:478px;width:12px;height:12px;background:#2a2c32;border-radius:50%;"><svg class="a" style="left:3.5px;top:3.5px" width="5" height="5" viewBox="0 0 5 5"><path d="M0.3 0.3 L4.7 4.7 M4.7 0.3 L0.3 4.7" stroke="#fff" stroke-width="1"/></svg></div>
<div class="a" style="left:719px;top:20px;width:487px;height:32px;background:rgba(255,255,255,.32);border-radius:8px 0 0 0;"></div>
<div class="a" style="left:719px;top:52px;width:487px;height:610px;background:rgba(255,255,255,.44);"></div>
<div class="a" style="left:719px;top:51px;width:487px;height:2px;background:linear-gradient(180deg,rgba(0,80,40,.10),rgba(0,80,40,0));"></div>
<svg class="a" style="left:732px;top:30px;color:#1c2b25" width="11" height="11" viewBox="0 0 24 24"><path d="M12 2 A10 10 0 1 1 6 20 L2 21.5 L3.8 17.5 A10 10 0 0 1 12 2Z" fill="currentColor"/></svg>
<div class="a" style="left:753px;top:33px;width:3px;height:6px;background:#58b048;"></div><div class="a" style="left:756px;top:31px;width:3px;height:8px;background:#e8a028;"></div><div class="a" style="left:758px;top:33px;width:3px;height:5px;background:#4868d8;"></div>
<div class="a" style="left:769px;top:31px;width:1.2px;height:10px;background:#1c2b25;"></div>
<span class="t" id="t121" style="left:775px;top:29.5px;font-size:9.5px;line-height:13px;color:#1f2f2c;font-weight:500;transform:scaleX(0.9775);transform-origin:left center;">VC作業（雑談あり）</span>
<svg class="a" style="left:1184px;top:32px" width="9" height="9" viewBox="0 0 9 9"><path d="M1 1 L8 8 M8 1 L1 8" stroke="#1c2b25" stroke-width="1.3"/></svg>
<div class="a" style="left:771px;top:53px;width:2px;height:84px;background:rgba(90,150,130,.32);border-radius:1px;"></div>
<span class="t" id="t122" style="left:780px;top:54px;font-size:10px;line-height:14px;color:#2b4644;font-weight:500;transform:scaleX(0.9184);transform-origin:left center;">Mac→強制</span>
<span class="t" id="t123" style="left:780px;top:82px;font-size:10px;line-height:14px;color:#2b4644;font-weight:500;transform:scaleX(1.0000);transform-origin:left center;">っていうルールらしい</span>
<span class="t" id="t124" style="left:780px;top:109px;font-size:10px;line-height:14px;color:#2b4644;font-weight:500;transform:scaleX(1.0000);transform-origin:left center;">誰がこの3つにウイルス対策ソフト入れるねんクソが</span>
<span class="t" id="t125" style="left:780px;top:125.5px;font-size:9px;line-height:13px;color:#2b4644;font-weight:500;">#</span>
<div class="a" style="left:788px;top:127.5px;width:8px;height:6px;background:#38b0f0;border-radius:1px;"></div><div class="a" style="left:787px;top:133.5px;width:10px;height:2.5px;background:#c0c4cc;border-radius:1px;"></div>
<div class="a" style="left:801px;top:127.5px;width:1.2px;height:9px;background:#2b4644;"></div>
<span class="t" id="t126" style="left:806px;top:125.5px;font-size:9px;line-height:13px;color:#2b4644;font-weight:500;transform:scaleX(1.0137);transform-origin:left center;">パソコン・19:09 ›</span>
<span class="t" id="t127" style="left:770px;top:142px;font-size:10px;line-height:14px;color:#2b4644;font-weight:500;transform:scaleX(1.0000);transform-origin:left center;">Macにウイルス対策ソフトはマジの情弱</span>
<span class="t" id="t128" style="left:770px;top:158.5px;font-size:10px;line-height:14px;color:#2b4644;font-weight:500;transform:scaleX(0.9890);transform-origin:left center;">一丁前に毎回復元するたびにぶっ壊れてくれるMcAfeeくん。</span>
<div class="a" style="left:730px;top:177.5px;width:438px;height:1px;background:#e84848;"></div>
<div class="a" style="left:1166px;top:173.5px;width:19px;height:9px;background:#e84848;border-radius:3px 4px 4px 3px;clip-path:polygon(0 50%,18% 0,100% 0,100% 100%,18% 100%);"></div>
<span class="t" id="t129" style="left:1171px;top:174px;font-size:6px;line-height:8px;color:#fff;font-weight:700;transform:scaleX(1.0000);transform-origin:left center;">新規</span>
<div class="a" style="left:732px;top:185px;width:26px;height:26px;background:#ececec;border-radius:50%;overflow:hidden;"><svg class="a" style="left:0;top:0;overflow:hidden" width="26" height="26" viewBox="0 0 50 50"><defs><clipPath id="av13"><circle cx="25" cy="25" r="25"/></clipPath></defs><g clip-path="url(#av13)"><rect width="50" height="50" fill="#ececec"/>
<path d="M0 50 V36 C6 33 12 31 17 30 L25 38 L33 30 C38 31 45 33 50 36 V50Z" fill="#161616"/>
<path d="M13 30 C10 22 12 8 20 4 C26 1 34 4 36 10 C39 18 39 26 36 31 C33 34 30 30 25 36 C21 30 16 34 13 30Z" fill="#2a2a2a"/>
<ellipse cx="24.5" cy="19" rx="5.8" ry="8" fill="#c4c4c4"/>
<path d="M19 22 C20 29 29 29 30 22 C28 25 21 25 19 22Z" fill="#555"/>
<path d="M19.5 14.5 H23 M26 14.5 H29.5" stroke="#222" stroke-width="1"/>
<path d="M4 22 C8 20 9 26 12 25 M38 14 C42 16 44 12 47 16 M39 24 C43 23 44 28 48 27" stroke="#999" stroke-width="1.2" fill="none"/>
<path d="M25 36 L22 50 M25 36 L29 50" stroke="#444" stroke-width="0.8"/></g></svg></div>
<span class="t" id="t130" style="left:770px;top:185px;font-size:9.5px;line-height:13px;color:#1a2a28;font-weight:700;transform:scaleX(0.9487);transform-origin:left center;">Zàkø_Sà</span>
<div class="a" style="left:812px;top:187.5px;width:35px;height:10px;background:rgba(255,255,255,.35);border-radius:2px;"></div><svg class="a" style="left:812.5px;top:187.0px;color:#b06bf0" width="11" height="11"><use href="#i-webm"/></svg><span class="t" id="t131" style="left:823px;top:188.3px;font-size:6.5px;line-height:9px;color:#2a3a40;font-weight:700;transform:scaleX(1.0476);transform-origin:left center;">WEBM</span>
<span class="t" id="t132" style="left:852px;top:187.5px;font-size:7px;line-height:10px;color:#3a5050;font-weight:500;transform:scaleX(0.8333);transform-origin:left center;">19:13</span>
<span class="t" id="t133" style="left:770px;top:199px;font-size:10px;line-height:14px;color:#2b4644;font-weight:500;transform:scaleX(0.9630);transform-origin:left center;">yoo hi</span>
<div class="a" style="left:732px;top:226px;width:26px;height:26px;background:#e89838;border-radius:50%;overflow:hidden;"><svg class="a" style="left:0;top:0;overflow:hidden" width="26" height="26" viewBox="0 0 50 50"><defs><clipPath id="av14"><circle cx="25" cy="25" r="25"/></clipPath></defs><g clip-path="url(#av14)"><rect width="50" height="50" fill="#e89838"/>
<path d="M28 0 H50 V50 H36Z" fill="#f0d060"/>
<circle cx="44" cy="20" r="5" fill="#e86820"/><circle cx="40" cy="38" r="5" fill="#f4ecd0"/><circle cx="46" cy="30" r="4" fill="#d85818"/>
<path d="M0 0 H14 L6 22 H0Z" fill="#f07828"/>
<path d="M8 6 C16 -2 34 0 40 8 L30 12 C24 6 16 8 10 12Z" fill="#4c9ce0"/>
<path d="M14 8 C20 4 30 4 36 9" stroke="#8cc8f4" stroke-width="1.2" fill="none"/>
<path d="M13 26 C11 12 20 8 27 8 C35 8 43 13 40 28 L36 32 H16Z" fill="#5c3ca0"/>
<rect x="36" y="16" width="6" height="13" rx="3" fill="#3a3a44"/>
<path d="M16 26 C16 18 38 18 38 26 C38 34 32 38 27 38 C21 38 16 34 16 26Z" fill="#fce4d4"/>
<path d="M14 24 C16 14 26 12 28 20 C31 13 38 15 39 24 L34 20 L28 21 L22 20Z" fill="#6846ac"/>
<circle cx="22" cy="27" r="4" fill="#fff" stroke="#1e1e28" stroke-width="1.1"/><circle cx="33" cy="27" r="4" fill="#fff" stroke="#1e1e28" stroke-width="1.1"/>
<path d="M26 27 H29" stroke="#1e1e28" stroke-width="1"/>
<circle cx="22.5" cy="27.5" r="1.2" fill="#1e1e28"/><circle cx="32.5" cy="27.5" r="1.2" fill="#1e1e28"/>
<path d="M25 33 C27 34.5 29 34.5 30.5 33" stroke="#7a4030" stroke-width="0.8" fill="none"/>
<path d="M16 50 C16 40 22 37 28 38 C34 37 40 40 40 50Z" fill="#5a3a98"/>
<rect x="32" y="39" width="12" height="9" rx="1" fill="#a8b8dc" transform="rotate(-8 38 43)"/>
<path d="M-2 36 H22 L24 44 H26 V50 H-2Z" fill="#7e7a58"/>
<path d="M0 30 H10 L12 36 H-2Z" fill="#8e8a68"/>
<circle cx="4" cy="49" r="4" fill="#3a3a34"/><circle cx="16" cy="50" r="4" fill="#3a3a34"/><circle cx="28" cy="50" r="3.5" fill="#3a3a34"/>
<rect x="2" y="20" width="6" height="10" fill="#c8c0a8"/></g></svg></div>
<span class="t" id="t134" style="left:770px;top:226px;font-size:9.5px;line-height:13px;color:#1a2a28;font-weight:700;transform:scaleX(1.0503);transform-origin:left center;">清楚枠のあざりんくん@ななもり。様ガチ恋勢</span>
<div class="a" style="left:984px;top:228px;width:31px;height:10px;background:rgba(255,255,255,.35);border-radius:2px;"></div><div class="a" style="left:987px;top:230px;width:4.5px;height:5px;background:#ecd8f8;border-radius:2px 2px 3.5px 3.5px;border:1.1px solid #8a50c8;"></div><span class="t" id="t135" style="left:995px;top:228.8px;font-size:6.5px;line-height:9px;color:#2a3a40;font-weight:700;transform:scaleX(1.0588);transform-origin:left center;">MORI</span>
<span class="t" id="t136" style="left:1021px;top:228px;font-size:7px;line-height:10px;color:#3a5050;font-weight:500;transform:scaleX(0.8333);transform-origin:left center;">19:13</span>
<span class="t" id="t137" style="left:770px;top:239.5px;font-size:10px;line-height:14px;color:#2b4644;font-weight:500;transform:scaleX(1.0000);transform-origin:left center;">こいつマジでごみ</span>
<div class="a" style="left:784px;top:264px;width:72px;height:191px;border-radius:4px;box-shadow:0 2px 5px rgba(0,40,60,.45);"><div class="a" style="left:0px;top:0px;width:72px;height:191px;background:#23262a;border-radius:5px;"></div><div class="a" style="left:3px;top:3px;width:2px;height:2px;background:#e85050;border-radius:50%;"></div><div class="a" style="left:7px;top:3px;width:2px;height:2px;background:#e8b030;border-radius:50%;"></div><div class="a" style="left:11px;top:3px;width:2px;height:2px;background:#48b848;border-radius:50%;"></div><span class="t" id="t138" style="left:20px;top:2px;font-size:3.5px;line-height:5px;color:#aaa;">アプリ・アプリの情報</span><div class="a" style="left:5px;top:11px;width:5px;height:5px;background:#c84848;border-radius:1px;"></div><span class="t" id="t139" style="left:13px;top:9px;font-size:4px;line-height:6px;color:#eee;font-weight:700;">マカフィー</span><span class="t" id="t140" style="left:56px;top:9.5px;font-size:3.5px;line-height:5px;color:#ddd;font-weight:700;">22.0 MB</span><div class="a" style="left:6px;top:22px;width:18px;height:1.3px;background:#d0d2d6;"></div><div class="a" style="left:12px;top:32px;width:30px;height:1.3px;background:#9a9ca0;"></div><div class="a" style="left:12px;top:36px;width:42px;height:1.3px;background:#9a9ca0;"></div><div class="a" style="left:12px;top:40px;width:48px;height:1.3px;background:#d0d2d6;"></div><div class="a" style="left:12px;top:44px;width:44px;height:1.3px;background:#9a9ca0;"></div><div class="a" style="left:12px;top:48px;width:52px;height:1.3px;background:#9a9ca0;"></div><div class="a" style="left:12px;top:52px;width:40px;height:1.3px;background:#d0d2d6;"></div><div class="a" style="left:12px;top:60px;width:36px;height:1.3px;background:#9a9ca0;"></div><div class="a" style="left:12px;top:66px;width:30px;height:1.3px;background:#9a9ca0;"></div><div class="a" style="left:12px;top:70px;width:20px;height:1.3px;background:#d0d2d6;"></div><div class="a" style="left:12px;top:74px;width:48px;height:1.3px;background:#9a9ca0;"></div><div class="a" style="left:6px;top:82px;width:14px;height:1.3px;background:#9a9ca0;"></div><div class="a" style="left:6px;top:87px;width:16px;height:1.3px;background:#d0d2d6;"></div><div class="a" style="left:6px;top:92px;width:12px;height:1.3px;background:#9a9ca0;"></div><div class="a" style="left:6px;top:97px;width:12px;height:1.3px;background:#9a9ca0;"></div><div class="a" style="left:23px;top:110px;width:26px;height:26px;background:#888a90;border-radius:5px;"></div><svg class="a" style="left:26px;top:113px" width="20" height="20" viewBox="0 0 20 20"><path d="M2.5 3.5 L10 7.5 L17.5 3.5 V14 L10 18 L2.5 14Z M6.5 9 V12.2 L10 14 L13.5 12.2 V9 L10 11Z" fill="#d83830" fill-rule="evenodd"/></svg><div class="a" style="left:6px;top:142px;width:24px;height:1.3px;background:#b0b2b6;"></div><div class="a" style="left:6px;top:147px;width:56px;height:1.3px;background:#b0b2b6;"></div><div class="a" style="left:6px;top:155px;width:10px;height:1.3px;background:#b0b2b6;"></div><div class="a" style="left:6px;top:160px;width:58px;height:1.3px;background:#b0b2b6;"></div><div class="a" style="left:6px;top:164px;width:58px;height:1.3px;background:#b0b2b6;"></div><div class="a" style="left:6px;top:168px;width:58px;height:1.3px;background:#b0b2b6;"></div><div class="a" style="left:5px;top:178px;width:62px;height:8px;background:#34353a;border-radius:2px;"></div><div class="a" style="left:64px;top:181px;width:3px;height:3px;background:#e8a030;border-radius:1px;"></div></div>
<svg class="a" style="left:744px;top:496px" width="24" height="10" viewBox="0 0 24 10"><path d="M1 9.5 V4 A3 3 0 0 1 4 1 H23" fill="none" stroke="rgba(60,90,110,.5)" stroke-width="1.1"/></svg>
<div class="a" style="left:770px;top:492.5px;width:9px;height:9px;background:#e89838;border-radius:50%;overflow:hidden;"><svg class="a" style="left:0;top:0;overflow:hidden" width="9" height="9" viewBox="0 0 50 50"><defs><clipPath id="av15"><circle cx="25" cy="25" r="25"/></clipPath></defs><g clip-path="url(#av15)"><rect width="50" height="50" fill="#e89838"/>
<path d="M28 0 H50 V50 H36Z" fill="#f0d060"/>
<circle cx="44" cy="20" r="5" fill="#e86820"/><circle cx="40" cy="38" r="5" fill="#f4ecd0"/><circle cx="46" cy="30" r="4" fill="#d85818"/>
<path d="M0 0 H14 L6 22 H0Z" fill="#f07828"/>
<path d="M8 6 C16 -2 34 0 40 8 L30 12 C24 6 16 8 10 12Z" fill="#4c9ce0"/>
<path d="M14 8 C20 4 30 4 36 9" stroke="#8cc8f4" stroke-width="1.2" fill="none"/>
<path d="M13 26 C11 12 20 8 27 8 C35 8 43 13 40 28 L36 32 H16Z" fill="#5c3ca0"/>
<rect x="36" y="16" width="6" height="13" rx="3" fill="#3a3a44"/>
<path d="M16 26 C16 18 38 18 38 26 C38 34 32 38 27 38 C21 38 16 34 16 26Z" fill="#fce4d4"/>
<path d="M14 24 C16 14 26 12 28 20 C31 13 38 15 39 24 L34 20 L28 21 L22 20Z" fill="#6846ac"/>
<circle cx="22" cy="27" r="4" fill="#fff" stroke="#1e1e28" stroke-width="1.1"/><circle cx="33" cy="27" r="4" fill="#fff" stroke="#1e1e28" stroke-width="1.1"/>
<path d="M26 27 H29" stroke="#1e1e28" stroke-width="1"/>
<circle cx="22.5" cy="27.5" r="1.2" fill="#1e1e28"/><circle cx="32.5" cy="27.5" r="1.2" fill="#1e1e28"/>
<path d="M25 33 C27 34.5 29 34.5 30.5 33" stroke="#7a4030" stroke-width="0.8" fill="none"/>
<path d="M16 50 C16 40 22 37 28 38 C34 37 40 40 40 50Z" fill="#5a3a98"/>
<rect x="32" y="39" width="12" height="9" rx="1" fill="#a8b8dc" transform="rotate(-8 38 43)"/>
<path d="M-2 36 H22 L24 44 H26 V50 H-2Z" fill="#7e7a58"/>
<path d="M0 30 H10 L12 36 H-2Z" fill="#8e8a68"/>
<circle cx="4" cy="49" r="4" fill="#3a3a34"/><circle cx="16" cy="50" r="4" fill="#3a3a34"/><circle cx="28" cy="50" r="3.5" fill="#3a3a34"/>
<rect x="2" y="20" width="6" height="10" fill="#c8c0a8"/></g></svg></div>
<span class="t" id="t141" style="left:782px;top:491px;font-size:8.5px;line-height:12px;color:#34484c;font-weight:500;transform:scaleX(1.0267);transform-origin:left center;">@清楚枠のあざりんくん@ななもり。様ガチ恋勢</span>
<div class="a" style="left:977px;top:492.29999999999995px;width:31px;height:10px;background:rgba(255,255,255,.35);border-radius:2px;"></div><div class="a" style="left:980px;top:494.29999999999995px;width:4.5px;height:5px;background:#ecd8f8;border-radius:2px 2px 3.5px 3.5px;border:1.1px solid #8a50c8;"></div><span class="t" id="t142" style="left:988px;top:493.1px;font-size:6.5px;line-height:9px;color:#2a3a40;font-weight:700;transform:scaleX(1.0588);transform-origin:left center;">MORI</span>
<svg class="a" style="left:1013px;top:492px" width="10" height="9" viewBox="0 0 10 9"><path d="M1 8 C1 4.5 3 3 7 3 M5 0.8 L8.5 3 L5 5.6" fill="none" stroke="#24383a" stroke-width="1.2"/></svg>
<span class="t" id="t143" style="left:1026px;top:491px;font-size:8.5px;line-height:12px;color:#24383a;font-weight:500;transform:scaleX(1.0000);transform-origin:left center;">クロームブック→いらない Windows...</span>
<div class="a" style="left:732px;top:506px;width:27px;height:27px;background:#f4f0ee;border-radius:50%;overflow:hidden;box-shadow:0 0 0 .8px rgba(208,64,64,.7);"><svg class="a" style="left:0;top:0;overflow:hidden" width="27" height="27" viewBox="0 0 50 50"><defs><clipPath id="av16"><circle cx="25" cy="25" r="25"/></clipPath></defs><g clip-path="url(#av16)"><rect width="50" height="50" fill="#f6f4f2"/>
<rect x="0" y="0" width="27" height="30" fill="#1a1a1a"/>
<rect x="0" y="19" width="27" height="7" fill="#3ab83a"/>
<path d="M14 30 L22 2 H28 L20 30Z" fill="#e86838"/>
<path d="M4 27 C12 22 30 22 46 26 C46 31 30 29 6 32Z" fill="#c01818"/>
<rect x="27" y="0" width="23" height="25" fill="#f4f4f4"/>
<path d="M38 5 L46 9.5 V18.5 L38 23 L30 18.5 V9.5Z" fill="none" stroke="#2468c0" stroke-width="3.2"/>
<path d="M40 11 A4 4 0 1 0 40 17" fill="none" stroke="#2468c0" stroke-width="2"/>
<rect x="0" y="31" width="13" height="8" fill="#c89068"/>
<circle cx="22" cy="42" r="3.6" fill="#d82020"/>
<path d="M31 37 h5 v4 h-5z" fill="#3878c8"/><path d="M34 41 h5 v4 h-5z" fill="#f0c828"/>
<rect x="28" y="31" width="9" height="6" fill="#e888c8"/><rect x="32" y="31" width="5" height="6" fill="#f0a028"/>
<circle cx="43" cy="35" r="3.5" fill="#a8a8a0"/>
<path d="M40 45 A5 5 0 0 1 47 41" stroke="#38b848" stroke-width="2.2" fill="none"/></g></svg></div>
<div class="a" style="left:752px;top:505px;width:6px;height:6px;background:#d02828;border-radius:50%;"></div>
<div class="a" style="left:730.5px;top:524.5px;width:6.5px;height:6.5px;background:#fff;border-radius:50%;box-shadow:0 0 0 1px #111;"></div>
<div class="a" style="left:733.3px;top:526px;width:1px;height:3.5px;background:#111;"></div>
<span class="t" id="t144" style="left:770px;top:506px;font-size:9.5px;line-height:13px;color:#f0a890;font-weight:500;transform:scaleX(1.0437);transform-origin:left center;background:linear-gradient(90deg,#c8b8e8,#f8a8b8 40%,#f8b898 70%,#f090a0);-webkit-background-clip:text;background-clip:text;color:transparent;">あるふぁ@Monokai&amp;AtCoder&amp;茶軸税</span>
<div class="a" style="left:942px;top:508px;width:34px;height:10px;background:rgba(255,255,255,.35);border-radius:2px;"></div><svg class="a" style="left:942.5px;top:507.5px;color:#b06bf0" width="11" height="11"><use href="#i-webm"/></svg><span class="t" id="t145" style="left:953px;top:508.8px;font-size:6.5px;line-height:9px;color:#2a3a40;font-weight:700;transform:scaleX(1.0000);transform-origin:left center;">WEBM</span>
<span class="t" id="t146" style="left:981px;top:508px;font-size:7px;line-height:10px;color:#3a5050;font-weight:500;transform:scaleX(0.8333);transform-origin:left center;">19:14</span>
<span class="t" id="t147" style="left:770px;top:519.5px;font-size:10px;line-height:14px;color:#2b4644;font-weight:500;transform:scaleX(0.9949);transform-origin:left center;">学校からもらったchromebookでできること</span>
<div class="a" style="left:769.5px;top:541.0px;width:3px;height:3px;background:#2b4644;border-radius:50%;"></div>
<span class="t" id="t148" style="left:780px;top:535.5px;font-size:10px;line-height:14px;color:#2b4644;font-weight:500;transform:scaleX(1.0000);transform-origin:left center;">discord</span>
<div class="a" style="left:769.5px;top:557.0px;width:3px;height:3px;background:#2b4644;border-radius:50%;"></div>
<span class="t" id="t149" style="left:780px;top:551.5px;font-size:10px;line-height:14px;color:#2b4644;font-weight:500;transform:scaleX(1.0000);transform-origin:left center;">オンライン開発環境での開発環境</span>
<div class="a" style="left:769.5px;top:573.0px;width:3px;height:3px;background:#2b4644;border-radius:50%;"></div>
<span class="t" id="t150" style="left:780px;top:567.5px;font-size:10px;line-height:14px;color:#2b4644;font-weight:500;transform:scaleX(1.0000);transform-origin:left center;">ブラウジング</span>
<div class="a" style="left:769.5px;top:589.0px;width:3px;height:3px;background:#2b4644;border-radius:50%;"></div>
<span class="t" id="t151" style="left:780px;top:583.5px;font-size:10px;line-height:14px;color:#2b4644;font-weight:500;transform:scaleX(1.0000);transform-origin:left center;">ブラウザでの動画編集(重すぎる)</span>
<span class="t" id="t152" style="left:770px;top:600.5px;font-size:10px;line-height:14px;color:#2b4644;font-weight:500;transform:scaleX(1.0000);transform-origin:left center;">あれ、意外と使えるかもしれん</span>
<div class="a" style="left:726px;top:633.8px;width:471px;height:30px;background:rgba(255,255,255,.55);border-radius:8px;"></div>
<span class="t" id="t153" style="left:787px;top:645.5px;font-size:10px;line-height:14px;color:#6a7a90;font-weight:500;transform:scaleX(1.0326);transform-origin:left center;">VC作業（雑談あり）へメッセージを送信</span>
<div class="a" style="left:743px;top:649px;width:9px;height:1.3px;background:#3a4a5a;"></div>
<div class="a" style="left:747px;top:645px;width:1.3px;height:9px;background:#3a4a5a;"></div>
<div class="a" style="left:770px;top:648px;width:3px;height:6px;background:#58b048;"></div><div class="a" style="left:773px;top:647px;width:3px;height:7px;background:#e8a028;"></div>
<div class="a" style="left:1149px;top:647.5px;width:9px;height:8px;background:#2a3a4a;border-radius:50%;"></div>
<div class="a" style="left:1174px;top:647.5px;width:9px;height:8px;background:#2a3a4a;border-radius:3px;"></div>
</div>
<div style="left:0px;top:1032px;width:1920px;height:48px;background:linear-gradient(90deg,#e9eaec 0%,#e6e6ef 35%,#e4e4ee 55%,#e8e9ec 80%,#e9eaec 100%);box-shadow:inset 0 1px 0 #d4d6da;"></div>
<svg class="a" style="left:17px;top:1039px" width="32" height="32" viewBox="0 0 32 32"><circle cx="15" cy="17" r="7" fill="#f8a020"/><path d="M3 13 A4.5 4.5 0 0 1 9 7.5 A6 6 0 0 1 20 9 A3.6 3.6 0 0 1 20 16 H5.5 A3.2 3.2 0 0 1 3 13Z" fill="#b8cce8"/><path d="M12 29 A4 4 0 0 1 13 21.5 A5.5 5.5 0 0 1 23.5 21 A4 4 0 0 1 25 29Z" fill="#a8c0e0"/><path d="M5 22 C7 27 11 28 14 27" stroke="#f08010" stroke-width="2.4" fill="none"/></svg>
<div style="left:30px;top:1039px;width:15px;height:15px;background:#c42b1c;border-radius:50%;"></div>
<span class="t" id="t154" style="left:32.5px;top:1040px;font-size:9.5px;line-height:13px;color:#fff;font-weight:700;transform:scaleX(0.9091);transform-origin:left center;">9+</span>
<span class="t" id="t155" style="left:51px;top:1040px;font-size:11.5px;line-height:16px;color:#1c1c1c;transform:scaleX(0.8846);transform-origin:left center;">31°C</span>
<span class="t" id="t156" style="left:51px;top:1055.5px;font-size:11.5px;line-height:16px;color:#4a4a4a;transform:scaleX(0.8642);transform-origin:left center;">晴れ時々くもり</span>
<div style="left:661px;top:1044px;width:11px;height:11px;background:linear-gradient(135deg,#2fa8e8,#0f78d0);border-radius:1.5px;"></div>
<div style="left:673px;top:1044px;width:11px;height:11px;background:linear-gradient(135deg,#2ba0e4,#0f78d0);border-radius:1.5px;"></div>
<div style="left:661px;top:1056px;width:11px;height:11px;background:linear-gradient(135deg,#1f90dc,#0f78d0);border-radius:1.5px;"></div>
<div style="left:673px;top:1056px;width:11px;height:11px;background:linear-gradient(135deg,#1a88d8,#0f78d0);border-radius:1.5px;"></div>
<div style="left:698px;top:1041px;width:217px;height:30px;background:#f6f6f8;border-radius:15px;box-shadow:0 0 0 1px #d6d6dc;"></div>
<svg class="a" style="left:708px;top:1048px" width="16" height="16" viewBox="0 0 16 16"><circle cx="6.5" cy="6.5" r="5" fill="none" stroke="#1c1c1c" stroke-width="1.5"/><path d="M10.3 10.3 L14.5 14.5" stroke="#1c1c1c" stroke-width="1.7" stroke-linecap="round"/></svg>
<span class="t" id="t157" style="left:734px;top:1047px;font-size:13px;line-height:18px;color:#5a5a5a;transform:scaleX(1.0769);transform-origin:left center;">検索</span>
<div style="left:873px;top:1047px;width:8px;height:8px;background:#f8d040;border-radius:50%;"></div><div style="left:879px;top:1045px;width:8px;height:8px;background:#f0f0f8;border-radius:50%;"></div><div style="left:884px;top:1050px;width:8px;height:8px;background:#f8b8c8;border-radius:50%;"></div><div style="left:876px;top:1053px;width:9px;height:9px;background:#a888e0;border-radius:50%;"></div><div style="left:883px;top:1057px;width:8px;height:7px;background:#78b848;border-radius:40%;transform:rotate(30deg);"></div><div style="left:870px;top:1053px;width:6px;height:6px;background:#f09838;border-radius:50%;"></div>
<svg class="a" style="left:898px;top:1051px" width="11" height="10" viewBox="0 0 11 10"><path d="M5.5 9.5 C1 6.5 0 4.5 0.5 2.5 C1.2 0.2 4.2 0 5.5 2.2 C6.8 0 9.8 0.2 10.5 2.5 C11 4.5 10 6.5 5.5 9.5Z" fill="#f05838"/></svg>
<div style="left:929px;top:1051px;width:18px;height:16px;background:#262626;border-radius:2px;"></div>
<div style="left:937px;top:1045px;width:16px;height:15px;background:linear-gradient(225deg,#ffffff 10%,#c8c8cc 90%);border-radius:2px;box-shadow:0 0 0 1px #e8e9ec;"></div>
<svg class="a" style="left:972px;top:1044px" width="26" height="24" viewBox="0 0 26 24"><path d="M1 3.5 A1.5 1.5 0 0 1 2.5 2 H9 L11.5 5 H23 A1.5 1.5 0 0 1 24.5 6.5 V20 H1Z" fill="#e8a818"/><path d="M1 8 H24.5 V20.5 A1.5 1.5 0 0 1 23 22 H2.5 A1.5 1.5 0 0 1 1 20.5Z" fill="#fcd050"/><rect x="5.5" y="15" width="15" height="7" rx="1" fill="#1e88d8"/><rect x="9.5" y="17.5" width="7" height="1.5" fill="#58b0f0"/></svg>
<svg class="a" style="left:1016px;top:1043px" width="25" height="25" viewBox="0 0 48 48"><circle cx="24" cy="24" r="22" fill="#fff"/><path d="M24 2 A22 22 0 0 1 43.05 13 H24 A11 11 0 0 0 14.47 18.5 L5 13 A22 22 0 0 1 24 2Z" fill="#e33b2e"/><path d="M43.05 13 A22 22 0 0 1 24 46 L33.53 29.5 A11 11 0 0 0 33.5 18.5 L24 13Z" fill="#fbc116"/><path d="M24 46 A22 22 0 0 1 4.95 13 L14.47 29.5 A11 11 0 0 0 33.53 29.5 L24 46Z" fill="#2ba24c"/><path d="M4.95 13 L14.47 29.5" stroke="#2ba24c"/><circle cx="24" cy="24" r="9" fill="#fff"/><circle cx="24" cy="24" r="7.2" fill="#3f84f0"/></svg>
<div style="left:1053px;top:1037px;width:40px;height:39px;background:rgba(240,150,150,.62);border-radius:4px;"></div>
<div style="left:1061px;top:1045px;width:24px;height:24px;background:#5865f2;border-radius:50%;"></div>
<svg class="a" style="left:1065px;top:1051px" width="16" height="12" viewBox="0 0 17 13"><path d="M3 1.5 C5 0.5 6 0.5 6.3 0.5 L6.8 1.5 H10.2 L10.7 0.5 C11 0.5 12 0.5 14 1.5 C16 4.5 16.8 8 16.5 10.5 C15 11.8 13.5 12.3 12.3 12.5 L11.3 11 C11.8 10.8 12.4 10.5 12.9 10.1 C10 11.3 7 11.3 4.1 10.1 C4.6 10.5 5.2 10.8 5.7 11 L4.7 12.5 C3.5 12.3 2 11.8 0.5 10.5 C0.2 8 1 4.5 3 1.5Z" fill="#fff"/><ellipse cx="5.9" cy="7" rx="1.5" ry="1.7" fill="#5865f2"/><ellipse cx="11.1" cy="7" rx="1.5" ry="1.7" fill="#5865f2"/></svg>
<div style="left:1075px;top:1041px;width:11px;height:11px;background:#e83a3a;border-radius:50%;"></div>
<div style="left:1078.5px;top:1044.5px;width:4px;height:4px;background:#fff;border-radius:50%;"></div>
<div style="left:1068px;top:1072px;width:10px;height:3px;background:#d83838;border-radius:2px;"></div>
<svg class="a" style="left:1104px;top:1043px" width="26" height="26" viewBox="0 0 26 26"><defs><linearGradient id="eg1" x1="0.1" y1="0.9" x2="0.9" y2="0.1"><stop offset="0" stop-color="#0c54b0"/><stop offset="0.5" stop-color="#1c90d8"/><stop offset="1" stop-color="#48d878"/></linearGradient><linearGradient id="eg2" x1="0" y1="0" x2="1" y2="1"><stop offset="0" stop-color="#2cb0e8"/><stop offset="1" stop-color="#1468c4"/></linearGradient></defs><circle cx="13" cy="13" r="12" fill="url(#eg1)"/><path d="M2.5 16 C2 9 8 6.5 12.5 7.5 C17 8.5 17.5 12.5 15.5 14 C14.8 13 13 12.3 11.5 12.8 C8.5 13.8 8.5 18.5 12 21 C14 22.5 17 22.8 20 21.5 C17.5 24.5 13.5 25.5 9.5 24.2 C5.5 22.8 3 19.5 2.5 16Z" fill="url(#eg2)"/><path d="M15.3 14.2 C17.3 12.5 17 9.5 14.5 8 C18.5 8 22.5 10.5 23.6 14 C24 16.5 22 17.8 19.5 17.2 C17.5 16.8 15.8 15.6 15.3 14.2Z" fill="#e9eaee"/></svg>
<div style="left:1141px;top:1037px;width:40px;height:39px;background:rgba(255,255,255,.72);border-radius:4px;box-shadow:0 0 0 1px #dcdce0;"></div>
<div style="left:1149px;top:1044px;width:24px;height:24px;background:linear-gradient(135deg,#1a6a98,#0c3554);border-radius:2px;"><svg class="a" style="left:1.5px;top:2px" width="20" height="20" viewBox="0 0 16 16"><path d="M9.5 2.5 L3 8 L9.5 13.5 L9.5 10.6 L6.5 8 L9.5 5.4 Z" fill="#fff"/><circle cx="11" cy="8" r="1.8" fill="#fff"/></svg></div>
<div style="left:1153px;top:1072px;width:16px;height:3px;background:#1a8078;border-radius:2px;"></div>
<svg class="a" style="left:1193px;top:1043px" width="25" height="26" viewBox="0 0 25 26"><path d="M12.5 1 L24 7 L12.5 13 L1 7Z" fill="#68b840"/><path d="M1 7 L12.5 13 V25 L1 19Z" fill="#7a5438"/><path d="M24 7 L12.5 13 V25 L24 19Z" fill="#5a3c28"/><path d="M1 7 L12.5 13 V15.5 L1 9.5Z" fill="#509830"/><path d="M24 7 L12.5 13 V15.5 L24 9.5Z" fill="#3f8028"/></svg>
<div style="left:1203px;top:1073px;width:5px;height:3px;background:#808488;border-radius:2px;"></div>
<svg class="a" style="left:1236px;top:1044px" width="24" height="24" viewBox="0 0 48 48"><circle cx="24" cy="24" r="22" fill="#fff"/><path d="M24 2 A22 22 0 0 1 43.05 13 H24 A11 11 0 0 0 14.47 18.5 L5 13 A22 22 0 0 1 24 2Z" fill="#e33b2e"/><path d="M43.05 13 A22 22 0 0 1 24 46 L33.53 29.5 A11 11 0 0 0 33.5 18.5 L24 13Z" fill="#fbc116"/><path d="M24 46 A22 22 0 0 1 4.95 13 L14.47 29.5 A11 11 0 0 0 33.53 29.5 L24 46Z" fill="#2ba24c"/><path d="M4.95 13 L14.47 29.5" stroke="#2ba24c"/><circle cx="24" cy="24" r="9" fill="#fff"/><circle cx="24" cy="24" r="7.2" fill="#3f84f0"/></svg>
<div style="left:1250px;top:1038px;width:16px;height:16px;background:#7a28b0;border-radius:50%;"></div>
<div style="left:1256px;top:1044px;width:4px;height:4px;background:#f0c8ff;border-radius:1px;transform:rotate(45deg);"></div>
<div style="left:1246px;top:1073px;width:5px;height:3px;background:#808488;border-radius:2px;"></div>
<svg class="a" style="left:1621px;top:1052px" width="12" height="8" viewBox="0 0 12 8"><path d="M1 6.5 L6 1.5 L11 6.5" fill="none" stroke="#1c1c1c" stroke-width="1.4"/></svg>
<svg class="a" style="left:1652px;top:1047px" width="13" height="18" viewBox="0 0 13 18" fill="none" stroke="#107c78" stroke-width="1.3"><rect x="4" y="1" width="5" height="10" rx="2.5"/><path d="M1.5 8 A5 5 0 0 0 11.5 8 M6.5 13 V16.5"/></svg>
<svg class="a" style="left:1685px;top:1049px" width="12" height="14" viewBox="0 0 12 14" fill="none" stroke="#b0b0b4" stroke-width="1.1"><circle cx="6" cy="2.5" r="1.6"/><path d="M1.5 12.5 L6 4.5 L10.5 12.5 M2.8 9.5 H9.2"/></svg>
<div style="left:1721px;top:1049px;width:13px;height:13px;background:#1a6cd0;border-radius:50%;"></div>
<div style="left:1731px;top:1057px;width:5px;height:5px;background:#e03030;border-radius:50%;"></div>
<div style="left:1729px;top:1058.5px;width:3px;height:3px;background:#f8b020;border-radius:50%;"></div>
<svg class="a" style="left:1758px;top:1049px" width="17" height="13" viewBox="0 0 17 13" fill="none" stroke="#1c1c1c" stroke-width="1.3" stroke-linecap="round"><path d="M1 4.5 A10.5 10.5 0 0 1 16 4.5 M3.5 7.2 A7 7 0 0 1 13.5 7.2 M6 9.8 A3.5 3.5 0 0 1 11 9.8"/><circle cx="8.5" cy="11.8" r="0.9" fill="#1c1c1c" stroke="none"/></svg>
<svg class="a" style="left:1783px;top:1048px" width="17" height="15" viewBox="0 0 17 15" fill="none" stroke="#1c1c1c" stroke-width="1.2" stroke-linecap="round" stroke-linejoin="round"><path d="M1 5.5 H3.5 L7 2.5 V12.5 L3.5 9.5 H1Z"/><path d="M9.5 5.5 A3 3 0 0 1 9.5 9.5 M11.8 3.5 A6 6 0 0 1 11.8 11.5 M14 1.8 A8.5 8.5 0 0 1 14 13.2"/></svg>
<span class="t" id="t158" style="right:43px;top:1040px;font-size:11.5px;line-height:16px;color:#1c1c1c;transform:scaleX(0.9310);transform-origin:right center;">19:13</span>
<span class="t" id="t159" style="right:43px;top:1055.8px;font-size:11.5px;line-height:16px;color:#1c1c1c;transform:scaleX(1.0345);transform-origin:right center;">2025/09/15</span>
<svg class="a" style="left:1884px;top:1047px" width="16" height="17" viewBox="0 0 16 17" fill="none" stroke="#1c1c1c" stroke-width="1.2"><path d="M2 12.5 C3.5 11 3 8 3.5 6 A4.5 4.5 0 0 1 8 2.5 M2 12.5 H14 C12.8 11.3 13 10 13 9 M6 13 A2 2 0 0 0 10 13"/><path d="M6 5 H8.5 L6 8.5 H8.5 M10.5 1.5 H13.5 L10.5 5.5 H13.5" stroke-width="1.1"/></svg>
</div></body></html>
